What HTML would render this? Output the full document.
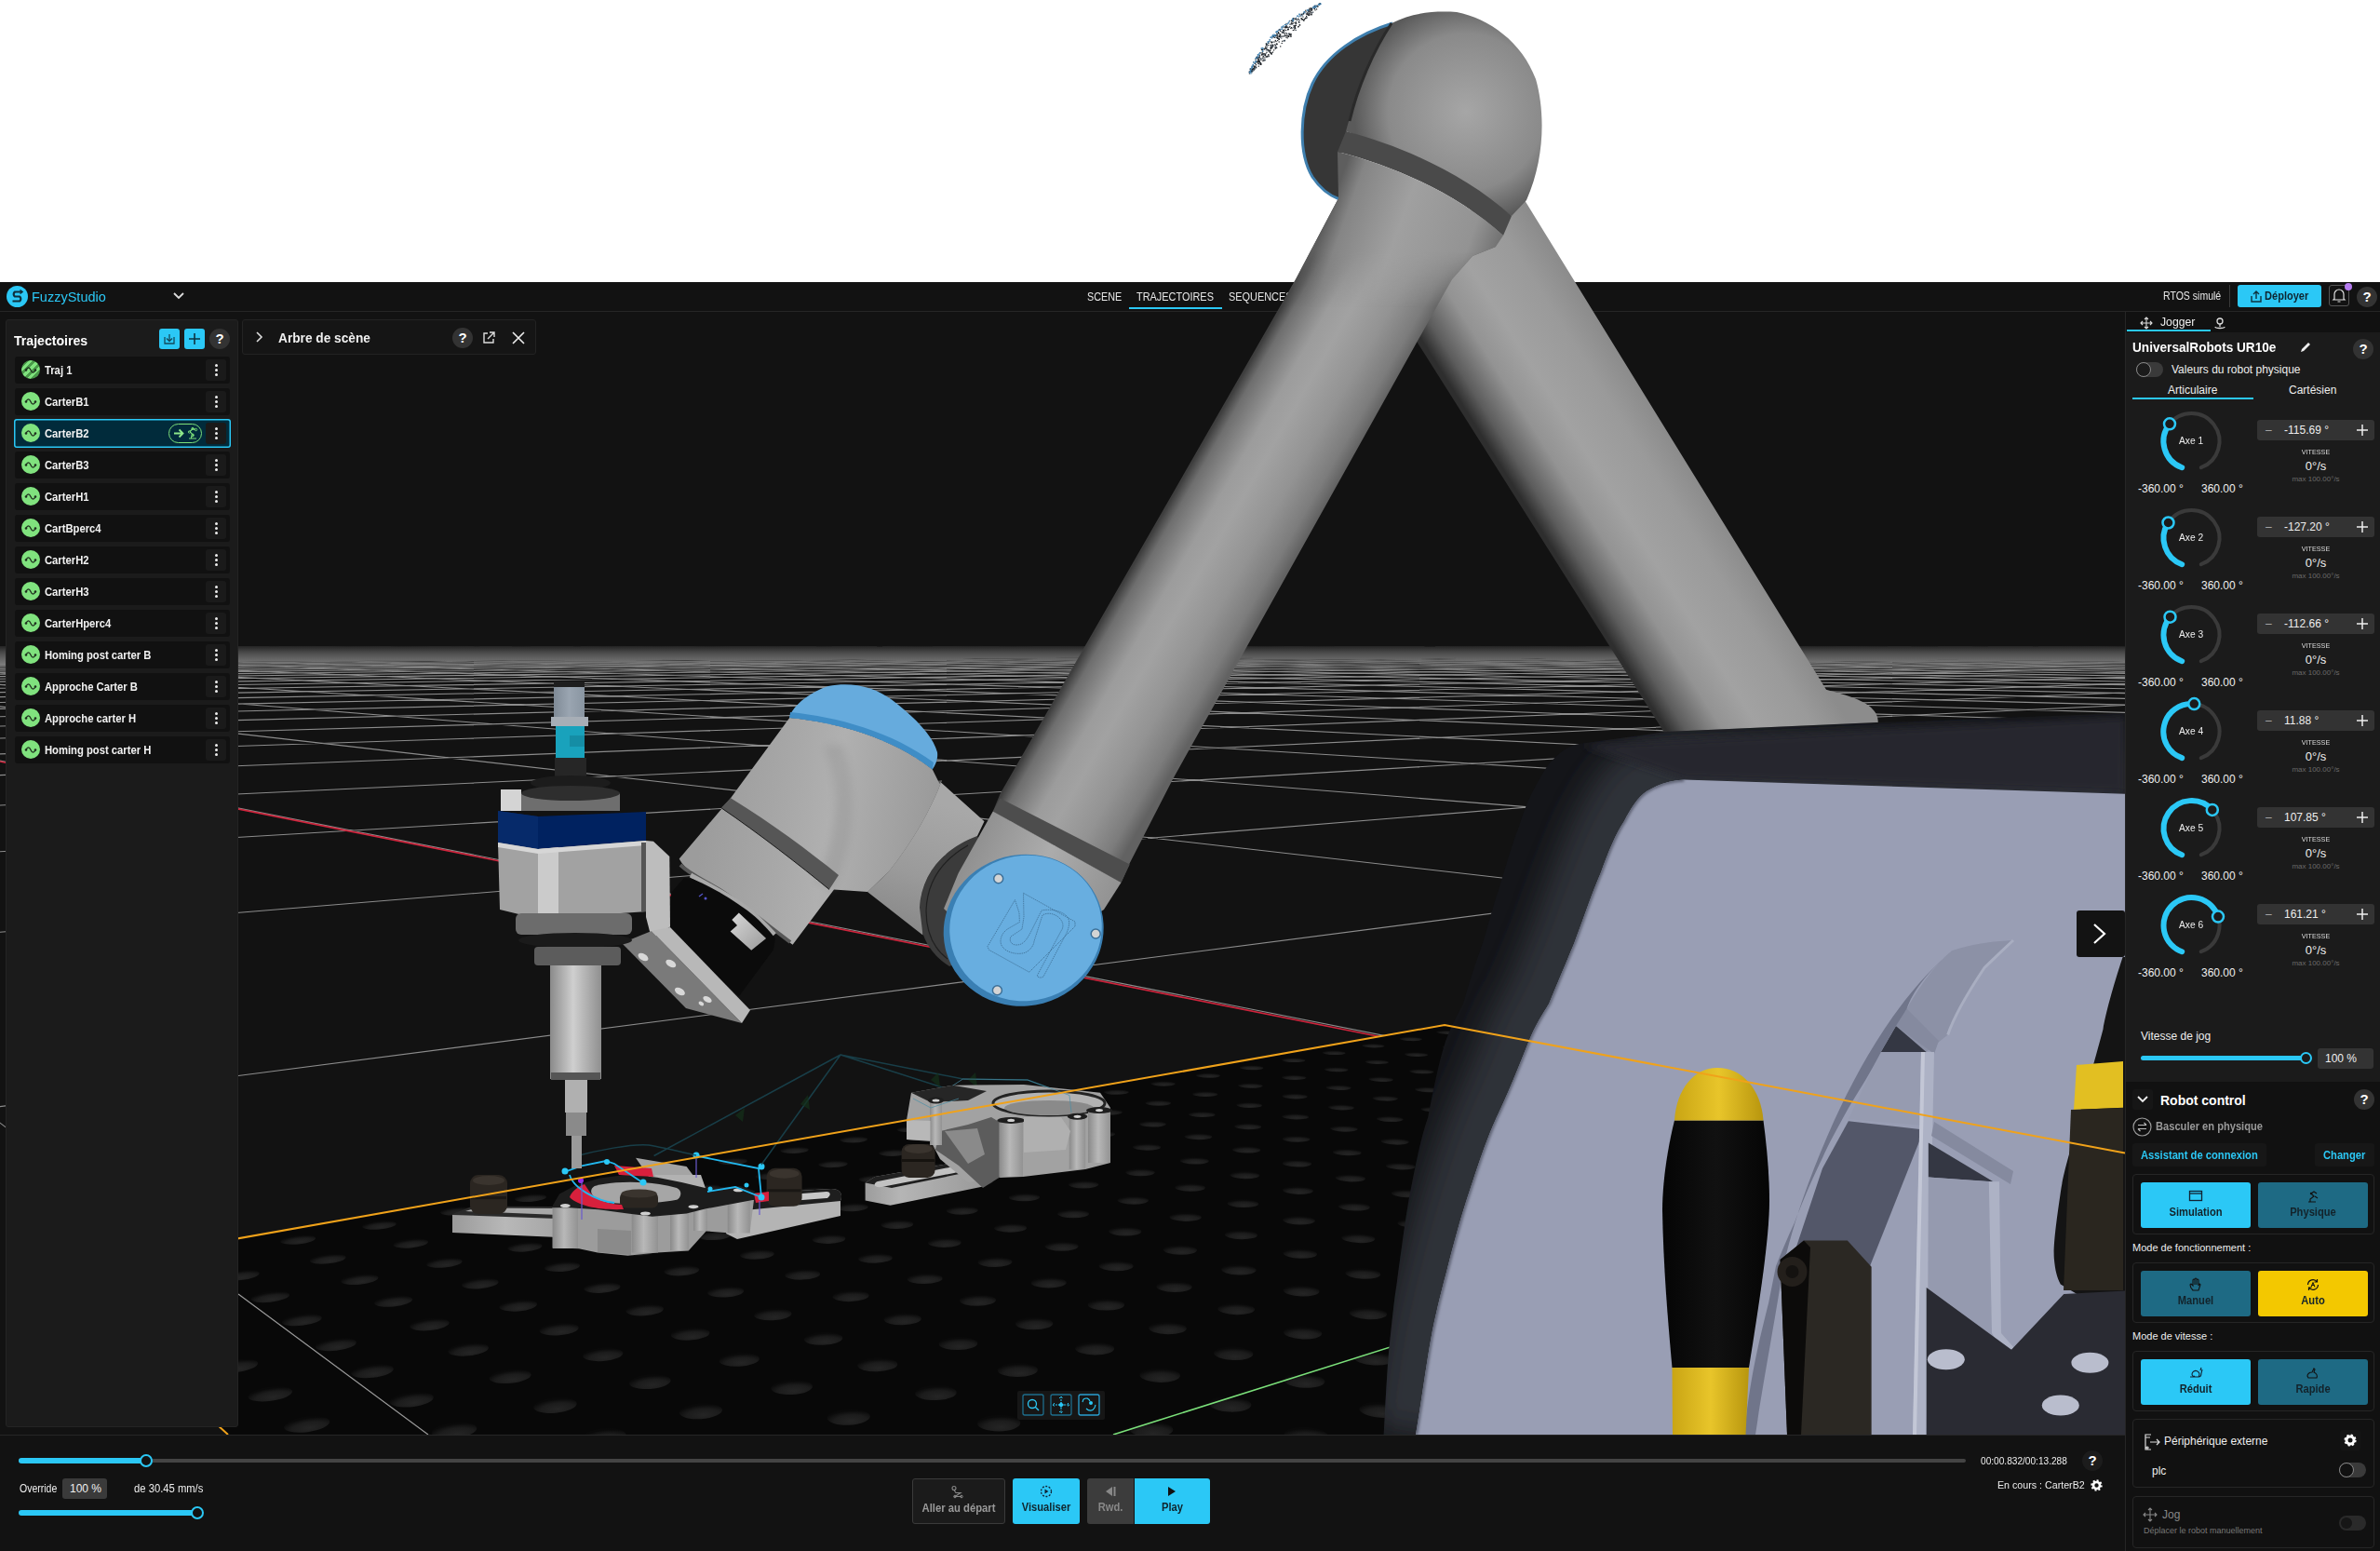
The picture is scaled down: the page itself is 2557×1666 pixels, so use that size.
<!DOCTYPE html><html><head><meta charset="utf-8"><style>
*{margin:0;padding:0;box-sizing:border-box}
html,body{width:2557px;height:1666px;overflow:hidden;background:#fff;font-family:"Liberation Sans",sans-serif;color:#e6e6e6}
.abs{position:absolute}
#topbar{position:absolute;left:0;top:303px;width:2557px;height:32px;background:#121212;border-bottom:1px solid #262626}
#main{position:absolute;left:0;top:335px;width:2557px;height:1331px;background:#121212}
#scene{position:absolute;left:0;top:0;width:2557px;height:1666px}
.t{position:absolute;white-space:nowrap;line-height:1}
#lp{position:absolute;left:6px;top:343px;width:250px;height:1190px;background:#1b1b1b;border:1px solid #242424;border-radius:3px}
.row{position:absolute;left:9px;width:231px;height:29px;background:#111;border-radius:3px}
.row .ic{position:absolute;left:7px;top:4px;width:20px;height:20px;border-radius:50%;background:#80e27e}
.row .nm{position:absolute;left:32px;top:8px;font-size:13px;font-weight:bold;color:#f2f2f2;white-space:nowrap;line-height:1;transform:scaleX(.865);transform-origin:left}
.row .kb{position:absolute;left:205px;top:3px;width:22px;height:23px;background:#1a1a1a;border-radius:3px}
.row .kb i{position:absolute;left:10px;width:3px;height:3px;background:#eee;border-radius:50%}
.btnc{position:absolute;background:#2bc8f6;border-radius:3px}
.help{position:absolute;border-radius:50%;background:#333;color:#fff;font-weight:bold;text-align:center}
#rp{position:absolute;left:2283px;top:335px;width:274px;height:1331px;background:#111;border-left:1px solid #262626}
#bb{position:absolute;left:0;top:1541px;width:2283px;height:125px;background:#121212;border-top:1px solid #262626}
</style></head><body>
<div id="topbar">
 <svg class="abs" style="left:6px;top:3px" width="25" height="25"><circle cx="12.5" cy="12.5" r="11.5" fill="#2bc8f6"/>
  <path d="M17 7.5H10a3 3 0 0 0 0 5h5a3 3 0 0 1 0 5H7.5" fill="none" stroke="#0e2f3c" stroke-width="2.2"/><path d="M15.5 5.5l2.5 2-2.5 2" fill="none" stroke="#0e2f3c" stroke-width="1.6"/></svg>
 <div class="t" style="left:34px;top:8px;font-size:15px;color:#2bc8f6;transform:scaleX(.967);transform-origin:left">FuzzyStudio</div>
 <svg class="abs" style="left:185px;top:9px" width="14" height="12"><path d="M2 3l5 5 5-5" fill="none" stroke="#ddd" stroke-width="1.8"/></svg>
 <div class="t" style="left:1168px;top:9px;font-size:13px;color:#e8e8e8;transform:scaleX(.83);transform-origin:left">SCENE</div>
 <div class="t" style="left:1221px;top:9px;font-size:13px;color:#e8e8e8;transform:scaleX(.84);transform-origin:left">TRAJECTOIRES</div>
 <div class="abs" style="left:1213px;top:27px;width:100px;height:2px;background:#2bc8f6"></div>
 <div class="t" style="left:1320px;top:9px;font-size:13px;color:#e8e8e8;transform:scaleX(.84);transform-origin:left">SEQUENCES</div>
 <div class="t" style="left:2324px;top:8px;font-size:13px;color:#e8e8e8;transform:scaleX(.81);transform-origin:left">RTOS simulé</div>
 <div class="abs" style="left:2395px;top:3px;width:1px;height:24px;background:#3a3a3a"></div>
 <div class="abs" style="left:2404px;top:3px;width:90px;height:24px;background:#2bc8f6;border-radius:3px">
  <svg class="abs" style="left:12px;top:5px" width="16" height="15"><path d="M3 7v6h10V7M8 2v8M5 5l3-3 3 3" fill="none" stroke="#0d3340" stroke-width="1.4"/></svg>
  <div class="t" style="left:29px;top:5px;font-size:13px;font-weight:bold;color:#0d2530;transform:scaleX(.85);transform-origin:left">Déployer</div></div>
 <div class="abs" style="left:2502px;top:3px;width:22px;height:23px;border:1px solid #555;border-radius:3px">
  <svg width="20" height="21"><path d="M5 14V9a5 5 0 0 1 10 0v5l1 1H4zM8.5 17h3" fill="none" stroke="#ddd" stroke-width="1.2"/></svg></div>
 <div class="abs" style="left:2519px;top:1px;width:8px;height:8px;border-radius:50%;background:#b57cf0"></div>
 <div class="help" style="left:2532px;top:5px;width:22px;height:22px;font-size:15px;line-height:22px">?</div>
</div><div id="main"></div><svg id="scene" width="2557" height="1666" viewBox="0 0 2557 1666" xmlns="http://www.w3.org/2000/svg"><defs>
<radialGradient id="holeg" cx="0.55" cy="0.75" r="0.65"><stop offset="0" stop-color="#252525"/><stop offset="0.6" stop-color="#1c1c1c"/><stop offset="1" stop-color="#0a0a0a"/></radialGradient>
<linearGradient id="hzfade" x1="0" y1="0" x2="0" y2="1"><stop offset="0" stop-color="#121212" stop-opacity="0.85"/><stop offset="0.25" stop-color="#121212" stop-opacity="0.5"/><stop offset="0.6" stop-color="#121212" stop-opacity="0.15"/><stop offset="1" stop-color="#121212" stop-opacity="0"/></linearGradient>
<linearGradient id="fa" gradientUnits="userSpaceOnUse" x1="1221.6" y1="600" x2="1348.6" y2="673"><stop offset="0" stop-color="#3e3e3e"/><stop offset="0.08" stop-color="#6e6e6e"/><stop offset="0.3" stop-color="#9c9c9c"/><stop offset="0.45" stop-color="#a2a2a2"/><stop offset="0.7" stop-color="#939393"/><stop offset="0.9" stop-color="#7c7c7c"/><stop offset="1" stop-color="#626262"/></linearGradient>
<linearGradient id="ua" gradientUnits="userSpaceOnUse" x1="1675" y1="600" x2="1819" y2="509.6"><stop offset="0" stop-color="#2e2e2e"/><stop offset="0.1" stop-color="#5c5c5c"/><stop offset="0.3" stop-color="#939393"/><stop offset="0.5" stop-color="#a2a2a2"/><stop offset="0.8" stop-color="#9a9a9a"/><stop offset="1" stop-color="#8c8c8c"/></linearGradient>
<radialGradient id="dome" gradientUnits="userSpaceOnUse" cx="1575" cy="120" r="120"><stop offset="0" stop-color="#a6a6a6"/><stop offset="0.7" stop-color="#8a8a8a"/><stop offset="1" stop-color="#5a5a5a"/></radialGradient>
<linearGradient id="shaft" x1="0" y1="0" x2="1" y2="0"><stop offset="0" stop-color="#8a8a8a"/><stop offset="0.45" stop-color="#cfcfcf"/><stop offset="1" stop-color="#8f8f8f"/></linearGradient>
<linearGradient id="seatdark" gradientUnits="userSpaceOnUse" x1="1560" y1="1100" x2="1700" y2="1060"><stop offset="0" stop-color="#15161a"/><stop offset="0.7" stop-color="#22242a"/><stop offset="1" stop-color="#26282f"/></linearGradient>
<linearGradient id="seatlav" gradientUnits="userSpaceOnUse" x1="1560" y1="1100" x2="1760" y2="1050"><stop offset="0" stop-color="#505466"/><stop offset="0.6" stop-color="#989db2"/><stop offset="1" stop-color="#9ba0b6"/></linearGradient>
<linearGradient id="handle" x1="0" y1="0" x2="1" y2="0"><stop offset="0" stop-color="#050505"/><stop offset="0.5" stop-color="#111"/><stop offset="1" stop-color="#050505"/></linearGradient>
<linearGradient id="yel" x1="0" y1="0" x2="1" y2="0"><stop offset="0" stop-color="#c9a514"/><stop offset="0.5" stop-color="#e8c52a"/><stop offset="1" stop-color="#b8960e"/></linearGradient>
<linearGradient id="collar" gradientUnits="userSpaceOnUse" x1="1425" y1="235" x2="1605" y2="300"><stop offset="0" stop-color="#5e5e5e"/><stop offset="0.1" stop-color="#858585"/><stop offset="0.4" stop-color="#a0a0a0"/><stop offset="0.8" stop-color="#939393"/><stop offset="1" stop-color="#6a6a6a"/></linearGradient>
<linearGradient id="vfade" gradientUnits="userSpaceOnUse" x1="0" y1="270" x2="0" y2="330"><stop offset="0" stop-color="#fff"/><stop offset="1" stop-color="#000"/></linearGradient>
<mask id="collarmask" maskUnits="userSpaceOnUse" x="1300" y="100" width="400" height="300"><rect x="1300" y="100" width="400" height="300" fill="url(#vfade)"/></mask>
<linearGradient id="w1h" gradientUnits="userSpaceOnUse" x1="1030" y1="900" x2="1200" y2="980"><stop offset="0" stop-color="#8a8a8a"/><stop offset="0.5" stop-color="#acacac"/><stop offset="1" stop-color="#8f8f8f"/></linearGradient>
<linearGradient id="w2" gradientUnits="userSpaceOnUse" x1="760" y1="860" x2="1000" y2="900"><stop offset="0" stop-color="#9c9c9c"/><stop offset="0.35" stop-color="#a8a8a8"/><stop offset="0.55" stop-color="#b0b0b0"/><stop offset="1" stop-color="#9a9a9a"/></linearGradient>
<linearGradient id="cyl1" x1="0" y1="0" x2="1" y2="0"><stop offset="0" stop-color="#7f8a96"/><stop offset="0.5" stop-color="#9aa5b1"/><stop offset="1" stop-color="#8995a1"/></linearGradient>
<filter id="blur18" x="-50%" y="-50%" width="200%" height="200%"><feGaussianBlur stdDeviation="28"/></filter>
<clipPath id="lavclip"><path d="M1521 1541 C1528 1500 1533 1460 1538.8 1430 C1544 1405 1549 1385 1554 1366.5 C1562 1335 1570 1305 1579.5 1277.3 C1590 1245 1598 1222 1607.5 1201 C1620 1175 1630 1150 1642.5 1118.6 C1650 1100 1657 1090 1664.2 1078 C1675 1052 1683 1033 1691.3 1013 C1700 990 1710 960 1720 937 C1728 915 1736 895 1745 882 C1752 868 1760 856 1769 850 C1782 842 1795 838 1809.4 837.4 L2283 852.8 L2283 1541 Z"/></clipPath>
<linearGradient id="conseg" gradientUnits="userSpaceOnUse" x1="1000" y1="860" x2="960" y2="990"><stop offset="0" stop-color="#a8a8a8"/><stop offset="0.6" stop-color="#9a9a9a"/><stop offset="1" stop-color="#8a8a8a"/></linearGradient>
<filter id="blur3" x="-50%" y="-50%" width="200%" height="200%"><feGaussianBlur stdDeviation="4"/></filter>
<linearGradient id="barg" x1="0" y1="0" x2="1" y2="0"><stop offset="0" stop-color="#9a9a9a"/><stop offset="0.5" stop-color="#b8b8b8"/><stop offset="1" stop-color="#a5a5a5"/></linearGradient>
<linearGradient id="barg2" x1="0" y1="0" x2="1" y2="0"><stop offset="0" stop-color="#9c9c9c"/><stop offset="0.3" stop-color="#b5b5b5"/><stop offset="1" stop-color="#9a9a9a"/></linearGradient>
<linearGradient id="post" x1="0" y1="0" x2="1" y2="0"><stop offset="0" stop-color="#8a8a8a"/><stop offset="0.45" stop-color="#b8b8b8"/><stop offset="1" stop-color="#929292"/></linearGradient>
<linearGradient id="notch" x1="0" y1="0" x2="1" y2="1"><stop offset="0" stop-color="#d8d8d8"/><stop offset="1" stop-color="#9a9a9a"/></linearGradient>
<clipPath id="tableclip"><path d="M1552 1101 L2283 1238.5 L2283 1541 L245 1541 L54 1366 Z"/></clipPath>
<clipPath id="frclip"><path d="M1486.6 1541 C1489 1500 1491 1460 1493 1442.8 C1496 1415 1498 1395 1500.6 1379 C1506 1340 1511 1300 1515.8 1277 C1521 1250 1527 1220 1534.2 1200 C1540 1170 1546 1140 1553 1118.6 C1560 1100 1566 1090 1572 1078 C1580 1050 1587 1030 1593.8 1010.2 C1600 990 1605 970 1610 956 C1618 930 1625 905 1631.7 888.3 C1637 872 1642 858 1648 847.7 C1655 835 1660 826 1664.2 820.6 C1675 808 1685 801 1696.7 799 L1790 786 L2016 776 L2283 766 L2283 1541 Z"/></clipPath>
<filter id="blur12" x="-50%" y="-50%" width="200%" height="200%"><feGaussianBlur stdDeviation="16"/></filter>
<filter id="blur2" x="-50%" y="-50%" width="200%" height="200%"><feGaussianBlur stdDeviation="1.5"/></filter>
<clipPath id="vp"><rect x="0" y="335" width="2283" height="1206"/></clipPath>
</defs><g clip-path="url(#vp)"><rect x="0" y="335" width="2283" height="1206" fill="#121212"/><path d="M-410464.3 3527.0L-3201.3 697.4M-399861.4 3527.0L-3102.4 697.2M-389258.5 3527.0L-3006.3 697.0M-378655.6 3527.0L-2912.7 696.7M-368052.7 3527.0L-2821.7 696.5M-357449.9 3527.0L-2733.0 696.3M-346847.0 3527.0L-2646.6 696.1M-336244.1 3527.0L-2562.5 695.9M-325641.2 3527.0L-2480.4 695.7M-315038.3 3527.0L-2400.5 695.5M-304435.4 3527.0L-2322.4 695.3M-293832.5 3527.0L-2246.3 695.1M-283229.7 3527.0L-2172.0 694.9M-272626.8 3527.0L-2099.5 694.7M-262023.9 3527.0L-2028.7 694.6M-251421.0 3527.0L-1968.0 694.5M-240818.1 3527.0L-1914.0 694.5M-230215.2 3527.0L-1860.0 694.5M-219612.4 3527.0L-1806.0 694.5M-209009.5 3527.0L-1752.0 694.5M-198406.6 3527.0L-1698.0 694.5M-187803.7 3527.0L-1644.0 694.5M-177200.8 3527.0L-1590.0 694.5M-166597.9 3527.0L-1536.0 694.5M-155995.0 3527.0L-1482.0 694.5M-145392.2 3527.0L-1428.0 694.5M-134789.3 3527.0L-1374.0 694.5M-124186.4 3527.0L-1320.0 694.5M-113583.5 3527.0L-1266.0 694.5M-102980.6 3527.0L-1212.0 694.5M-92377.7 3527.0L-1158.0 694.5M-81774.9 3527.0L-1104.0 694.5M-71172.0 3527.0L-1050.0 694.5M-60569.1 3527.0L-996.0 694.5M-49966.2 3527.0L-942.0 694.5M-39363.3 3527.0L-888.0 694.5M-28760.4 3527.0L-834.0 694.5M-18157.5 3527.0L-780.0 694.5M-7554.7 3527.0L-726.0 694.5M3048.2 3527.0L-672.0 694.5M13651.1 3527.0L-618.0 694.5M24254.0 3527.0L-564.0 694.5M34856.9 3527.0L-510.0 694.5M45459.8 3527.0L-456.0 694.5M56062.6 3527.0L-401.9 694.5M66665.5 3527.0L-347.9 694.5M77268.4 3527.0L-293.9 694.5M87871.3 3527.0L-239.9 694.5M98474.2 3527.0L-185.9 694.5M109077.1 3527.0L-131.9 694.5M119680.0 3527.0L-77.9 694.5M130282.8 3527.0L-23.9 694.5M140885.7 3527.0L30.1 694.5M151488.6 3527.0L84.1 694.5M162091.5 3527.0L138.1 694.5M172694.4 3527.0L192.1 694.5M183297.3 3527.0L246.1 694.5M193900.1 3527.0L300.1 694.5M204503.0 3527.0L354.1 694.5M215105.9 3527.0L408.1 694.5M225708.8 3527.0L462.1 694.5M236311.7 3527.0L516.1 694.5M246914.6 3527.0L570.1 694.5M257517.5 3527.0L624.1 694.5M268120.3 3527.0L678.1 694.5M278723.2 3527.0L732.1 694.5M289326.1 3527.0L786.1 694.5M299929.0 3527.0L840.1 694.5M310531.9 3527.0L894.1 694.5M321134.8 3527.0L948.1 694.5M331737.6 3527.0L1002.1 694.5M342340.5 3527.0L1056.1 694.5M352943.4 3527.0L1110.1 694.5M363546.3 3527.0L1164.1 694.5M374149.2 3527.0L1218.1 694.5M384752.1 3527.0L1272.1 694.5M395354.9 3527.0L1326.1 694.5M405957.8 3527.0L1380.1 694.5M416560.7 3527.0L1434.1 694.5M427163.6 3527.0L1488.1 694.5M437766.5 3527.0L1542.1 694.5M448369.4 3527.0L1596.1 694.5M458972.3 3527.0L1650.1 694.5M469575.1 3527.0L1704.1 694.5M480178.0 3527.0L1758.1 694.5M490780.9 3527.0L1812.1 694.5M501383.8 3527.0L1866.1 694.5M276592.2 2219.8L1920.1 694.5M125600.6 1367.1L1974.1 694.5M82236.8 1122.2L2028.1 694.5M61661.2 1006.0L2082.1 694.5M49648.4 938.2L2136.1 694.5M41773.8 893.7L2190.1 694.5M36213.3 862.3L2244.1 694.5M32077.5 839.0L2298.1 694.5M28881.0 820.9L2352.1 694.5M26336.5 806.5L2406.1 694.5M24262.9 794.8L2460.1 694.5M22540.7 785.1L2514.1 694.5M21087.4 776.9L2568.1 694.5M19844.6 769.9L2622.1 694.5M18769.7 763.8L2676.1 694.5M17830.8 758.5L2730.1 694.5M17003.7 753.8L2784.1 694.5M16269.5 749.7L2838.1 694.5M15613.3 746.0L2892.1 694.5M15023.4 742.6L2946.1 694.5M14490.2 739.6L3000.1 694.5M14005.9 736.9L3054.1 694.5M13564.1 734.4L3108.1 694.5M13159.4 732.1L3162.1 694.5M12787.4 730.0L3216.1 694.5M12444.1 728.1L3270.1 694.5M12126.5 726.3L3324.1 694.5M11831.7 724.6L3378.1 694.5M11557.4 723.1L3432.1 694.5M11301.5 721.6L3486.1 694.5M11062.2 720.3L3540.1 694.5M10838.0 719.0L3594.2 694.5M10627.4 717.8L3648.2 694.5M10429.3 716.7L3702.2 694.5M10242.6 715.6L3756.2 694.5M10066.3 714.7L3810.2 694.5M9899.5 713.7L3864.2 694.5M9741.6 712.8L3918.2 694.5M9591.9 712.0L3972.2 694.5M9449.6 711.2L4026.2 694.5M9314.4 710.4L4080.2 694.5M9185.6 709.7L4134.2 694.5M9062.8 709.0L4188.2 694.5M508063.8 3527.0L8945.6 708.3M495231.2 3527.0L8686.5 707.6M482398.7 3527.0L8441.0 706.8M469566.2 3527.0L8208.0 706.2M456733.7 3527.0L7986.6 705.5M443901.2 3527.0L7776.0 704.9M431068.7 3527.0L7575.3 704.3M418236.1 3527.0L7383.9 703.7M405403.6 3527.0L7201.2 703.2M392571.1 3527.0L7026.6 702.7M379738.6 3527.0L6859.5 702.2M366906.1 3527.0L6699.6 701.7M354073.6 3527.0L6546.2 701.3M341241.0 3527.0L6399.1 700.8M328408.5 3527.0L6257.8 700.4M315576.0 3527.0L6122.1 700.0M302743.5 3527.0L5991.6 699.6M289911.0 3527.0L5865.9 699.3M277078.5 3527.0L5745.0 698.9M264245.9 3527.0L5628.4 698.6M251413.4 3527.0L5515.9 698.2M238580.9 3527.0L5407.4 697.9M225748.4 3527.0L5302.6 697.6M212915.9 3527.0L5201.3 697.3M200083.4 3527.0L5103.4 697.0M187250.8 3527.0L5008.8 696.8M174418.3 3527.0L4917.1 696.5M161585.8 3527.0L4828.4 696.2M148753.3 3527.0L4742.4 696.0M135920.8 3527.0L4659.0 695.7M123088.3 3527.0L4578.2 695.5M110255.7 3527.0L4499.8 695.3M97423.2 3527.0L4423.7 695.0M84590.7 3527.0L4349.8 694.8M71758.2 3527.0L4278.0 694.6M58925.7 3527.0L4210.1 694.5M46093.2 3527.0L4144.7 694.5M33260.6 3527.0L4079.4 694.5M20428.1 3527.0L4014.0 694.5M7595.6 3527.0L3948.7 694.5M-5236.9 3527.0L3883.3 694.5M-18069.4 3527.0L3818.0 694.5M-30901.9 3527.0L3752.6 694.5M-43734.5 3527.0L3687.2 694.5M-56567.0 3527.0L3621.9 694.5M-69399.5 3527.0L3556.5 694.5M-82232.0 3527.0L3491.2 694.5M-95064.5 3527.0L3425.8 694.5M-107897.0 3527.0L3360.5 694.5M-120729.6 3527.0L3295.1 694.5M-133562.1 3527.0L3229.7 694.5M-146394.6 3527.0L3164.4 694.5M-159227.1 3527.0L3099.0 694.5M-172059.6 3527.0L3033.7 694.5M-184892.2 3527.0L2968.3 694.5M-197724.7 3527.0L2903.0 694.5M-210557.2 3527.0L2837.6 694.5M-223389.7 3527.0L2772.2 694.5M-236222.2 3527.0L2706.9 694.5M-249054.7 3527.0L2641.5 694.5M-261887.3 3527.0L2576.2 694.5M-274719.8 3527.0L2510.8 694.5M-287552.3 3527.0L2445.5 694.5M-300384.8 3527.0L2380.1 694.5M-313217.3 3527.0L2314.7 694.5M-326049.8 3527.0L2249.4 694.5M-338882.4 3527.0L2184.0 694.5M-351714.9 3527.0L2118.7 694.5M-364547.4 3527.0L2053.3 694.5M-377379.9 3527.0L1988.0 694.5M-390212.4 3527.0L1922.6 694.5M-403044.9 3527.0L1857.2 694.5M-189402.1 1991.1L1791.9 694.5M-83499.7 1255.3L1726.5 694.5M-53733.1 1048.5L1661.2 694.5M-39708.0 951.1L1595.8 694.5M-31548.7 894.4L1530.5 694.5M-26211.8 857.3L1465.1 694.5M-22448.8 831.2L1399.7 694.5M-19652.8 811.7L1334.4 694.5M-17493.6 796.7L1269.0 694.5M-15775.9 784.8L1203.7 694.5M-14376.8 775.1L1138.3 694.5M-13215.2 767.0L1073.0 694.5M-12235.4 760.2L1007.6 694.5M-11397.7 754.4L942.2 694.5M-10673.4 749.4L876.9 694.5M-10040.9 745.0L811.5 694.5M-9483.8 741.1L746.2 694.5M-8989.3 737.7L680.8 694.5M-8547.5 734.6L615.5 694.5M-8150.3 731.8L550.1 694.5M-7791.4 729.3L484.7 694.5M-7465.4 727.1L419.4 694.5M-7168.0 725.0L354.0 694.5M-6895.7 723.1L288.7 694.5M-6645.3 721.4L223.3 694.5M-6414.4 719.8L158.0 694.5M-6200.7 718.3L92.6 694.5M-6002.4 716.9L27.2 694.5M-5817.8 715.6L-38.1 694.5M-5645.7 714.4L-103.5 694.5M-5484.7 713.3L-168.8 694.5M-5333.9 712.3L-234.2 694.5M-5192.3 711.3L-299.5 694.5M-5059.0 710.3L-364.9 694.5M-4933.4 709.5L-430.3 694.5M-4814.9 708.7L-495.6 694.5M-4702.7 707.9L-561.0 694.5M-4596.6 707.1L-626.3 694.5M-4495.9 706.4L-691.7 694.5M-4400.2 705.8L-757.0 694.5M-4309.3 705.1L-822.4 694.5M-4222.7 704.5L-887.8 694.5M-4140.1 704.0L-953.1 694.5M-4061.3 703.4L-1018.5 694.5M-3986.1 702.9L-1083.8 694.5M-3914.1 702.4L-1149.2 694.5M-3845.2 701.9L-1214.5 694.5M-3779.2 701.5L-1279.9 694.5M-3715.9 701.0L-1345.3 694.5M-3655.1 700.6L-1410.6 694.5M-3596.8 700.2L-1476.0 694.5M-3540.6 699.8L-1541.3 694.5M-3486.6 699.4L-1606.7 694.5M-3434.7 699.1L-1672.0 694.5M-3384.6 698.7L-1737.4 694.5M-3336.3 698.4L-1802.8 694.5M-3289.7 698.1L-1868.1 694.5M-3244.7 697.7L-1933.5 694.5" stroke="#8c8c8c" stroke-width="1.1" fill="none"/><rect x="0" y="694" width="2283" height="32" fill="url(#hzfade)"/><path d="M0 818 L1560 1129" stroke="#d0243c" stroke-width="1.6"/><path d="M1552 1101 L2283 1238.5 L2283 1541 L245 1541 L54 1366 Z" fill="#080808"/><g fill="url(#holeg)" clip-path="url(#tableclip)"><ellipse cx="1555.2" cy="1108.7" rx="11.9" ry="2.2" transform="rotate(2.0 1555.2 1108.7)"/><ellipse cx="1601.5" cy="1117.5" rx="12.2" ry="2.3" transform="rotate(2.3 1601.5 1117.5)"/><ellipse cx="1649.6" cy="1126.7" rx="12.5" ry="2.4" transform="rotate(2.5 1649.6 1126.7)"/><ellipse cx="1699.9" cy="1136.3" rx="12.9" ry="2.4" transform="rotate(2.8 1699.9 1136.3)"/><ellipse cx="1752.3" cy="1146.3" rx="13.2" ry="2.5" transform="rotate(3.1 1752.3 1146.3)"/><ellipse cx="1807.1" cy="1156.7" rx="13.6" ry="2.6" transform="rotate(3.4 1807.1 1156.7)"/><ellipse cx="1864.4" cy="1167.7" rx="14.0" ry="2.7" transform="rotate(3.8 1864.4 1167.7)"/><ellipse cx="1924.3" cy="1179.1" rx="14.5" ry="2.8" transform="rotate(4.1 1924.3 1179.1)"/><ellipse cx="1987.2" cy="1191.1" rx="15.0" ry="2.9" transform="rotate(4.4 1987.2 1191.1)"/><ellipse cx="2053.2" cy="1203.7" rx="15.5" ry="3.1" transform="rotate(4.8 2053.2 1203.7)"/><ellipse cx="2122.5" cy="1216.9" rx="16.1" ry="3.2" transform="rotate(5.2 2122.5 1216.9)"/><ellipse cx="2195.4" cy="1230.8" rx="16.7" ry="3.3" transform="rotate(5.6 2195.4 1230.8)"/><ellipse cx="2272.1" cy="1245.5" rx="17.4" ry="3.4" transform="rotate(6.0 2272.1 1245.5)"/><ellipse cx="1515.9" cy="1115.8" rx="12.1" ry="2.3" transform="rotate(1.9 1515.9 1115.8)"/><ellipse cx="1562.1" cy="1124.9" rx="12.4" ry="2.4" transform="rotate(2.1 1562.1 1124.9)"/><ellipse cx="1610.2" cy="1134.4" rx="12.7" ry="2.4" transform="rotate(2.4 1610.2 1134.4)"/><ellipse cx="1660.5" cy="1144.3" rx="13.0" ry="2.5" transform="rotate(2.7 1660.5 1144.3)"/><ellipse cx="1713.0" cy="1154.7" rx="13.4" ry="2.6" transform="rotate(3.0 1713.0 1154.7)"/><ellipse cx="1767.9" cy="1165.5" rx="13.8" ry="2.7" transform="rotate(3.3 1767.9 1165.5)"/><ellipse cx="1825.4" cy="1176.9" rx="14.2" ry="2.8" transform="rotate(3.7 1825.4 1176.9)"/><ellipse cx="1885.6" cy="1188.8" rx="14.7" ry="3.0" transform="rotate(4.0 1885.6 1188.8)"/><ellipse cx="1948.7" cy="1201.2" rx="15.2" ry="3.1" transform="rotate(4.4 1948.7 1201.2)"/><ellipse cx="2015.1" cy="1214.3" rx="15.7" ry="3.2" transform="rotate(4.8 2015.1 1214.3)"/><ellipse cx="2084.8" cy="1228.1" rx="16.3" ry="3.3" transform="rotate(5.2 2084.8 1228.1)"/><ellipse cx="2158.3" cy="1242.6" rx="17.0" ry="3.5" transform="rotate(5.6 2158.3 1242.6)"/><ellipse cx="2235.7" cy="1257.9" rx="17.7" ry="3.6" transform="rotate(6.0 2235.7 1257.9)"/><ellipse cx="1475.3" cy="1123.1" rx="12.2" ry="2.3" transform="rotate(1.7 1475.3 1123.1)"/><ellipse cx="1521.4" cy="1132.5" rx="12.6" ry="2.4" transform="rotate(2.0 1521.4 1132.5)"/><ellipse cx="1569.5" cy="1142.4" rx="12.9" ry="2.5" transform="rotate(2.3 1569.5 1142.4)"/><ellipse cx="1619.7" cy="1152.7" rx="13.2" ry="2.6" transform="rotate(2.6 1619.7 1152.7)"/><ellipse cx="1672.3" cy="1163.4" rx="13.6" ry="2.7" transform="rotate(2.9 1672.3 1163.4)"/><ellipse cx="1727.2" cy="1174.7" rx="14.0" ry="2.9" transform="rotate(3.2 1727.2 1174.7)"/><ellipse cx="1784.8" cy="1186.4" rx="14.4" ry="3.0" transform="rotate(3.6 1784.8 1186.4)"/><ellipse cx="1845.3" cy="1198.8" rx="14.9" ry="3.1" transform="rotate(3.9 1845.3 1198.8)"/><ellipse cx="1908.7" cy="1211.8" rx="15.4" ry="3.2" transform="rotate(4.3 1908.7 1211.8)"/><ellipse cx="1975.4" cy="1225.4" rx="16.0" ry="3.4" transform="rotate(4.7 1975.4 1225.4)"/><ellipse cx="2045.6" cy="1239.8" rx="16.6" ry="3.5" transform="rotate(5.1 2045.6 1239.8)"/><ellipse cx="2119.6" cy="1254.9" rx="17.2" ry="3.6" transform="rotate(5.6 2119.6 1254.9)"/><ellipse cx="2197.7" cy="1270.9" rx="17.9" ry="3.8" transform="rotate(6.0 2197.7 1270.9)"/><ellipse cx="2280.2" cy="1287.8" rx="18.7" ry="4.0" transform="rotate(6.5 2280.2 1287.8)"/><ellipse cx="1433.2" cy="1130.7" rx="12.4" ry="2.4" transform="rotate(1.5 1433.2 1130.7)"/><ellipse cx="1479.2" cy="1140.5" rx="12.7" ry="2.5" transform="rotate(1.8 1479.2 1140.5)"/><ellipse cx="1527.3" cy="1150.7" rx="13.1" ry="2.6" transform="rotate(2.1 1527.3 1150.7)"/><ellipse cx="1577.5" cy="1161.3" rx="13.4" ry="2.7" transform="rotate(2.4 1577.5 1161.3)"/><ellipse cx="1630.0" cy="1172.5" rx="13.8" ry="2.9" transform="rotate(2.7 1630.0 1172.5)"/><ellipse cx="1685.0" cy="1184.1" rx="14.2" ry="3.0" transform="rotate(3.1 1685.0 1184.1)"/><ellipse cx="1742.7" cy="1196.4" rx="14.6" ry="3.1" transform="rotate(3.4 1742.7 1196.4)"/><ellipse cx="1803.3" cy="1209.2" rx="15.1" ry="3.2" transform="rotate(3.8 1803.3 1209.2)"/><ellipse cx="1867.0" cy="1222.7" rx="15.6" ry="3.4" transform="rotate(4.2 1867.0 1222.7)"/><ellipse cx="1934.0" cy="1237.0" rx="16.2" ry="3.5" transform="rotate(4.7 1934.0 1237.0)"/><ellipse cx="2004.6" cy="1251.9" rx="16.8" ry="3.7" transform="rotate(5.1 2004.6 1251.9)"/><ellipse cx="2079.1" cy="1267.8" rx="17.5" ry="3.8" transform="rotate(5.6 2079.1 1267.8)"/><ellipse cx="2157.9" cy="1284.5" rx="18.2" ry="4.0" transform="rotate(6.0 2157.9 1284.5)"/><ellipse cx="2241.2" cy="1302.2" rx="19.0" ry="4.2" transform="rotate(6.5 2241.2 1302.2)"/><ellipse cx="1389.7" cy="1138.6" rx="12.6" ry="2.5" transform="rotate(1.4 1389.7 1138.6)"/><ellipse cx="1435.6" cy="1148.7" rx="12.9" ry="2.6" transform="rotate(1.6 1435.6 1148.7)"/><ellipse cx="1483.5" cy="1159.2" rx="13.3" ry="2.7" transform="rotate(1.9 1483.5 1159.2)"/><ellipse cx="1533.6" cy="1170.3" rx="13.6" ry="2.9" transform="rotate(2.2 1533.6 1170.3)"/><ellipse cx="1586.1" cy="1181.9" rx="14.0" ry="3.0" transform="rotate(2.6 1586.1 1181.9)"/><ellipse cx="1641.2" cy="1194.0" rx="14.4" ry="3.1" transform="rotate(2.9 1641.2 1194.0)"/><ellipse cx="1699.0" cy="1206.7" rx="14.9" ry="3.2" transform="rotate(3.3 1699.0 1206.7)"/><ellipse cx="1759.7" cy="1220.1" rx="15.3" ry="3.4" transform="rotate(3.7 1759.7 1220.1)"/><ellipse cx="1823.5" cy="1234.2" rx="15.9" ry="3.5" transform="rotate(4.1 1823.5 1234.2)"/><ellipse cx="1890.8" cy="1249.0" rx="16.4" ry="3.7" transform="rotate(4.6 1890.8 1249.0)"/><ellipse cx="1961.8" cy="1264.7" rx="17.1" ry="3.9" transform="rotate(5.0 1961.8 1264.7)"/><ellipse cx="2036.8" cy="1281.2" rx="17.8" ry="4.0" transform="rotate(5.5 2036.8 1281.2)"/><ellipse cx="2116.2" cy="1298.7" rx="18.5" ry="4.2" transform="rotate(6.0 2116.2 1298.7)"/><ellipse cx="2200.3" cy="1317.2" rx="19.4" ry="4.4" transform="rotate(6.6 2200.3 1317.2)"/><ellipse cx="2289.7" cy="1336.9" rx="20.3" ry="4.6" transform="rotate(7.1 2289.7 1336.9)"/><ellipse cx="1344.6" cy="1146.7" rx="12.8" ry="2.6" transform="rotate(1.1 1344.6 1146.7)"/><ellipse cx="1390.3" cy="1157.2" rx="13.1" ry="2.7" transform="rotate(1.4 1390.3 1157.2)"/><ellipse cx="1438.1" cy="1168.1" rx="13.5" ry="2.9" transform="rotate(1.7 1438.1 1168.1)"/><ellipse cx="1488.1" cy="1179.6" rx="13.8" ry="3.0" transform="rotate(2.0 1488.1 1179.6)"/><ellipse cx="1540.6" cy="1191.6" rx="14.2" ry="3.1" transform="rotate(2.4 1540.6 1191.6)"/><ellipse cx="1595.6" cy="1204.2" rx="14.6" ry="3.3" transform="rotate(2.7 1595.6 1204.2)"/><ellipse cx="1653.4" cy="1217.5" rx="15.1" ry="3.4" transform="rotate(3.1 1653.4 1217.5)"/><ellipse cx="1714.2" cy="1231.4" rx="15.6" ry="3.6" transform="rotate(3.5 1714.2 1231.4)"/><ellipse cx="1778.2" cy="1246.1" rx="16.1" ry="3.7" transform="rotate(4.0 1778.2 1246.1)"/><ellipse cx="1845.8" cy="1261.6" rx="16.7" ry="3.9" transform="rotate(4.5 1845.8 1261.6)"/><ellipse cx="1917.1" cy="1277.9" rx="17.3" ry="4.1" transform="rotate(5.0 1917.1 1277.9)"/><ellipse cx="1992.6" cy="1295.2" rx="18.1" ry="4.3" transform="rotate(5.5 1992.6 1295.2)"/><ellipse cx="2072.5" cy="1313.6" rx="18.8" ry="4.5" transform="rotate(6.0 2072.5 1313.6)"/><ellipse cx="2157.4" cy="1333.0" rx="19.7" ry="4.7" transform="rotate(6.6 2157.4 1333.0)"/><ellipse cx="2247.7" cy="1353.7" rx="20.7" ry="4.9" transform="rotate(7.1 2247.7 1353.7)"/><ellipse cx="1298.0" cy="1155.1" rx="13.0" ry="2.7" transform="rotate(0.9 1298.0 1155.1)"/><ellipse cx="1343.4" cy="1166.0" rx="13.3" ry="2.8" transform="rotate(1.2 1343.4 1166.0)"/><ellipse cx="1391.0" cy="1177.4" rx="13.7" ry="3.0" transform="rotate(1.5 1391.0 1177.4)"/><ellipse cx="1440.9" cy="1189.3" rx="14.0" ry="3.1" transform="rotate(1.8 1440.9 1189.3)"/><ellipse cx="1493.2" cy="1201.8" rx="14.4" ry="3.2" transform="rotate(2.2 1493.2 1201.8)"/><ellipse cx="1548.1" cy="1214.9" rx="14.9" ry="3.4" transform="rotate(2.5 1548.1 1214.9)"/><ellipse cx="1605.9" cy="1228.7" rx="15.3" ry="3.6" transform="rotate(2.9 1605.9 1228.7)"/><ellipse cx="1666.8" cy="1243.2" rx="15.8" ry="3.7" transform="rotate(3.4 1666.8 1243.2)"/><ellipse cx="1730.9" cy="1258.5" rx="16.4" ry="3.9" transform="rotate(3.8 1730.9 1258.5)"/><ellipse cx="1798.7" cy="1274.7" rx="17.0" ry="4.1" transform="rotate(4.3 1798.7 1274.7)"/><ellipse cx="1870.3" cy="1291.8" rx="17.6" ry="4.3" transform="rotate(4.8 1870.3 1291.8)"/><ellipse cx="1946.2" cy="1310.0" rx="18.4" ry="4.5" transform="rotate(5.4 1946.2 1310.0)"/><ellipse cx="2026.7" cy="1329.2" rx="19.2" ry="4.7" transform="rotate(6.0 2026.7 1329.2)"/><ellipse cx="2112.3" cy="1349.7" rx="20.1" ry="4.9" transform="rotate(6.6 2112.3 1349.7)"/><ellipse cx="2203.5" cy="1371.4" rx="21.1" ry="5.2" transform="rotate(7.2 2203.5 1371.4)"/><ellipse cx="1249.6" cy="1163.9" rx="13.2" ry="2.8" transform="rotate(0.7 1249.6 1163.9)"/><ellipse cx="1294.7" cy="1175.1" rx="13.6" ry="3.0" transform="rotate(0.9 1294.7 1175.1)"/><ellipse cx="1342.1" cy="1186.9" rx="13.9" ry="3.1" transform="rotate(1.2 1342.1 1186.9)"/><ellipse cx="1391.7" cy="1199.3" rx="14.3" ry="3.2" transform="rotate(1.6 1391.7 1199.3)"/><ellipse cx="1443.9" cy="1212.3" rx="14.7" ry="3.4" transform="rotate(1.9 1443.9 1212.3)"/><ellipse cx="1498.7" cy="1226.0" rx="15.1" ry="3.6" transform="rotate(2.3 1498.7 1226.0)"/><ellipse cx="1556.4" cy="1240.4" rx="15.6" ry="3.7" transform="rotate(2.7 1556.4 1240.4)"/><ellipse cx="1617.3" cy="1255.5" rx="16.1" ry="3.9" transform="rotate(3.2 1617.3 1255.5)"/><ellipse cx="1681.5" cy="1271.6" rx="16.7" ry="4.1" transform="rotate(3.6 1681.5 1271.6)"/><ellipse cx="1749.4" cy="1288.5" rx="17.3" ry="4.3" transform="rotate(4.2 1749.4 1288.5)"/><ellipse cx="1821.3" cy="1306.4" rx="17.9" ry="4.5" transform="rotate(4.7 1821.3 1306.4)"/><ellipse cx="1897.5" cy="1325.4" rx="18.7" ry="4.8" transform="rotate(5.3 1897.5 1325.4)"/><ellipse cx="1978.6" cy="1345.6" rx="19.5" ry="5.0" transform="rotate(5.9 1978.6 1345.6)"/><ellipse cx="2064.8" cy="1367.1" rx="20.4" ry="5.2" transform="rotate(6.5 2064.8 1367.1)"/><ellipse cx="2156.9" cy="1390.1" rx="21.5" ry="5.5" transform="rotate(7.2 2156.9 1390.1)"/><ellipse cx="2255.3" cy="1414.6" rx="22.6" ry="5.8" transform="rotate(7.9 2255.3 1414.6)"/><ellipse cx="1199.3" cy="1172.9" rx="13.5" ry="2.9" transform="rotate(0.4 1199.3 1172.9)"/><ellipse cx="1244.2" cy="1184.6" rx="13.8" ry="3.1" transform="rotate(0.7 1244.2 1184.6)"/><ellipse cx="1291.3" cy="1196.9" rx="14.2" ry="3.2" transform="rotate(1.0 1291.3 1196.9)"/><ellipse cx="1340.6" cy="1209.8" rx="14.5" ry="3.4" transform="rotate(1.3 1340.6 1209.8)"/><ellipse cx="1392.6" cy="1223.3" rx="14.9" ry="3.5" transform="rotate(1.6 1392.6 1223.3)"/><ellipse cx="1447.2" cy="1237.6" rx="15.4" ry="3.7" transform="rotate(2.0 1447.2 1237.6)"/><ellipse cx="1504.8" cy="1252.6" rx="15.9" ry="3.9" transform="rotate(2.5 1504.8 1252.6)"/><ellipse cx="1565.5" cy="1268.4" rx="16.4" ry="4.1" transform="rotate(2.9 1565.5 1268.4)"/><ellipse cx="1629.8" cy="1285.2" rx="17.0" ry="4.3" transform="rotate(3.4 1629.8 1285.2)"/><ellipse cx="1697.7" cy="1302.9" rx="17.6" ry="4.5" transform="rotate(4.0 1697.7 1302.9)"/><ellipse cx="1769.8" cy="1321.7" rx="18.3" ry="4.8" transform="rotate(4.5 1769.8 1321.7)"/><ellipse cx="1846.4" cy="1341.7" rx="19.0" ry="5.0" transform="rotate(5.2 1846.4 1341.7)"/><ellipse cx="1927.9" cy="1362.9" rx="19.9" ry="5.3" transform="rotate(5.8 1927.9 1362.9)"/><ellipse cx="2014.8" cy="1385.6" rx="20.8" ry="5.6" transform="rotate(6.5 2014.8 1385.6)"/><ellipse cx="2107.7" cy="1409.8" rx="21.9" ry="5.9" transform="rotate(7.2 2107.7 1409.8)"/><ellipse cx="2207.2" cy="1435.7" rx="23.1" ry="6.2" transform="rotate(8.0 2207.2 1435.7)"/><ellipse cx="1147.2" cy="1182.3" rx="13.7" ry="3.1" transform="rotate(0.1 1147.2 1182.3)"/><ellipse cx="1191.7" cy="1194.5" rx="14.1" ry="3.2" transform="rotate(0.3 1191.7 1194.5)"/><ellipse cx="1238.4" cy="1207.2" rx="14.4" ry="3.4" transform="rotate(0.6 1238.4 1207.2)"/><ellipse cx="1287.4" cy="1220.7" rx="14.8" ry="3.5" transform="rotate(1.0 1287.4 1220.7)"/><ellipse cx="1339.1" cy="1234.8" rx="15.2" ry="3.7" transform="rotate(1.3 1339.1 1234.8)"/><ellipse cx="1393.4" cy="1249.6" rx="15.7" ry="3.9" transform="rotate(1.7 1393.4 1249.6)"/><ellipse cx="1450.8" cy="1265.3" rx="16.2" ry="4.1" transform="rotate(2.2 1450.8 1265.3)"/><ellipse cx="1511.5" cy="1281.9" rx="16.7" ry="4.3" transform="rotate(2.7 1511.5 1281.9)"/><ellipse cx="1575.6" cy="1299.4" rx="17.3" ry="4.5" transform="rotate(3.2 1575.6 1299.4)"/><ellipse cx="1643.6" cy="1318.0" rx="17.9" ry="4.8" transform="rotate(3.7 1643.6 1318.0)"/><ellipse cx="1715.8" cy="1337.7" rx="18.6" ry="5.1" transform="rotate(4.3 1715.8 1337.7)"/><ellipse cx="1792.7" cy="1358.7" rx="19.4" ry="5.3" transform="rotate(5.0 1792.7 1358.7)"/><ellipse cx="1874.6" cy="1381.1" rx="20.2" ry="5.6" transform="rotate(5.7 1874.6 1381.1)"/><ellipse cx="1962.1" cy="1405.0" rx="21.2" ry="5.9" transform="rotate(6.4 1962.1 1405.0)"/><ellipse cx="2055.7" cy="1430.6" rx="22.3" ry="6.3" transform="rotate(7.2 2055.7 1430.6)"/><ellipse cx="2156.2" cy="1458.1" rx="23.5" ry="6.6" transform="rotate(8.0 2156.2 1458.1)"/><ellipse cx="2264.4" cy="1487.6" rx="24.9" ry="7.0" transform="rotate(8.8 2264.4 1487.6)"/><ellipse cx="1093.1" cy="1192.1" rx="14.0" ry="3.2" transform="rotate(-0.3 1093.1 1192.1)"/><ellipse cx="1137.1" cy="1204.8" rx="14.3" ry="3.3" transform="rotate(0.0 1137.1 1204.8)"/><ellipse cx="1183.3" cy="1218.0" rx="14.7" ry="3.5" transform="rotate(0.3 1183.3 1218.0)"/><ellipse cx="1232.0" cy="1232.0" rx="15.1" ry="3.7" transform="rotate(0.6 1232.0 1232.0)"/><ellipse cx="1283.3" cy="1246.7" rx="15.5" ry="3.9" transform="rotate(1.0 1283.3 1246.7)"/><ellipse cx="1337.3" cy="1262.2" rx="16.0" ry="4.1" transform="rotate(1.4 1337.3 1262.2)"/><ellipse cx="1394.4" cy="1278.6" rx="16.5" ry="4.3" transform="rotate(1.9 1394.4 1278.6)"/><ellipse cx="1454.8" cy="1296.0" rx="17.0" ry="4.5" transform="rotate(2.3 1454.8 1296.0)"/><ellipse cx="1518.9" cy="1314.3" rx="17.6" ry="4.8" transform="rotate(2.9 1518.9 1314.3)"/><ellipse cx="1586.8" cy="1333.8" rx="18.2" ry="5.1" transform="rotate(3.5 1586.8 1333.8)"/><ellipse cx="1659.1" cy="1354.6" rx="19.0" ry="5.3" transform="rotate(4.1 1659.1 1354.6)"/><ellipse cx="1736.1" cy="1376.7" rx="19.8" ry="5.7" transform="rotate(4.8 1736.1 1376.7)"/><ellipse cx="1818.3" cy="1400.3" rx="20.6" ry="6.0" transform="rotate(5.5 1818.3 1400.3)"/><ellipse cx="1906.3" cy="1425.6" rx="21.6" ry="6.3" transform="rotate(6.3 1906.3 1425.6)"/><ellipse cx="2000.7" cy="1452.7" rx="22.8" ry="6.7" transform="rotate(7.1 2000.7 1452.7)"/><ellipse cx="2102.2" cy="1481.8" rx="24.0" ry="7.1" transform="rotate(8.0 2102.2 1481.8)"/><ellipse cx="2211.6" cy="1513.2" rx="25.5" ry="7.5" transform="rotate(8.9 2211.6 1513.2)"/><ellipse cx="1036.7" cy="1202.3" rx="14.3" ry="3.3" transform="rotate(-0.6 1036.7 1202.3)"/><ellipse cx="1080.3" cy="1215.4" rx="14.6" ry="3.5" transform="rotate(-0.3 1080.3 1215.4)"/><ellipse cx="1126.0" cy="1229.3" rx="15.0" ry="3.6" transform="rotate(-0.1 1126.0 1229.3)"/><ellipse cx="1174.2" cy="1243.8" rx="15.4" ry="3.8" transform="rotate(0.3 1174.2 1243.8)"/><ellipse cx="1225.0" cy="1259.2" rx="15.8" ry="4.1" transform="rotate(0.6 1225.0 1259.2)"/><ellipse cx="1278.6" cy="1275.4" rx="16.3" ry="4.3" transform="rotate(1.0 1278.6 1275.4)"/><ellipse cx="1335.4" cy="1292.6" rx="16.8" ry="4.5" transform="rotate(1.5 1335.4 1292.6)"/><ellipse cx="1395.5" cy="1310.7" rx="17.4" ry="4.8" transform="rotate(2.0 1395.5 1310.7)"/><ellipse cx="1459.3" cy="1330.0" rx="18.0" ry="5.1" transform="rotate(2.5 1459.3 1330.0)"/><ellipse cx="1527.1" cy="1350.5" rx="18.6" ry="5.3" transform="rotate(3.1 1527.1 1350.5)"/><ellipse cx="1599.3" cy="1372.3" rx="19.3" ry="5.7" transform="rotate(3.8 1599.3 1372.3)"/><ellipse cx="1676.4" cy="1395.6" rx="20.2" ry="6.0" transform="rotate(4.5 1676.4 1395.6)"/><ellipse cx="1758.9" cy="1420.6" rx="21.1" ry="6.4" transform="rotate(5.3 1758.9 1420.6)"/><ellipse cx="1847.3" cy="1447.3" rx="22.1" ry="6.8" transform="rotate(6.1 1847.3 1447.3)"/><ellipse cx="1942.3" cy="1476.0" rx="23.3" ry="7.2" transform="rotate(7.0 1942.3 1476.0)"/><ellipse cx="2044.7" cy="1507.0" rx="24.6" ry="7.6" transform="rotate(8.0 2044.7 1507.0)"/><ellipse cx="2155.4" cy="1540.5" rx="26.1" ry="8.1" transform="rotate(9.0 2155.4 1540.5)"/><ellipse cx="978.2" cy="1212.9" rx="14.6" ry="3.4" transform="rotate(-1.0 978.2 1212.9)"/><ellipse cx="1021.1" cy="1226.6" rx="15.0" ry="3.6" transform="rotate(-0.7 1021.1 1226.6)"/><ellipse cx="1066.2" cy="1241.0" rx="15.3" ry="3.8" transform="rotate(-0.5 1066.2 1241.0)"/><ellipse cx="1113.8" cy="1256.2" rx="15.7" ry="4.0" transform="rotate(-0.1 1113.8 1256.2)"/><ellipse cx="1164.1" cy="1272.2" rx="16.2" ry="4.2" transform="rotate(0.2 1164.1 1272.2)"/><ellipse cx="1217.3" cy="1289.2" rx="16.7" ry="4.5" transform="rotate(0.6 1217.3 1289.2)"/><ellipse cx="1273.6" cy="1307.2" rx="17.2" ry="4.7" transform="rotate(1.1 1273.6 1307.2)"/><ellipse cx="1333.3" cy="1326.2" rx="17.7" ry="5.0" transform="rotate(1.6 1333.3 1326.2)"/><ellipse cx="1396.7" cy="1346.5" rx="18.3" ry="5.3" transform="rotate(2.1 1396.7 1346.5)"/><ellipse cx="1464.3" cy="1368.0" rx="19.0" ry="5.7" transform="rotate(2.7 1464.3 1368.0)"/><ellipse cx="1536.3" cy="1391.1" rx="19.8" ry="6.0" transform="rotate(3.4 1536.3 1391.1)"/><ellipse cx="1613.4" cy="1415.7" rx="20.6" ry="6.4" transform="rotate(4.2 1613.4 1415.7)"/><ellipse cx="1696.0" cy="1442.0" rx="21.5" ry="6.8" transform="rotate(5.0 1696.0 1442.0)"/><ellipse cx="1784.7" cy="1470.3" rx="22.6" ry="7.2" transform="rotate(5.9 1784.7 1470.3)"/><ellipse cx="1880.3" cy="1500.9" rx="23.8" ry="7.7" transform="rotate(6.9 1880.3 1500.9)"/><ellipse cx="1983.6" cy="1533.8" rx="25.1" ry="8.2" transform="rotate(7.9 1983.6 1533.8)"/><ellipse cx="917.1" cy="1223.9" rx="14.9" ry="3.6" transform="rotate(-1.4 917.1 1223.9)"/><ellipse cx="959.4" cy="1238.1" rx="15.3" ry="3.8" transform="rotate(-1.2 959.4 1238.1)"/><ellipse cx="1003.8" cy="1253.2" rx="15.7" ry="4.0" transform="rotate(-0.9 1003.8 1253.2)"/><ellipse cx="1050.8" cy="1269.1" rx="16.1" ry="4.2" transform="rotate(-0.6 1050.8 1269.1)"/><ellipse cx="1100.4" cy="1285.9" rx="16.6" ry="4.4" transform="rotate(-0.2 1100.4 1285.9)"/><ellipse cx="1153.0" cy="1303.6" rx="17.0" ry="4.7" transform="rotate(0.1 1153.0 1303.6)"/><ellipse cx="1208.7" cy="1322.5" rx="17.6" ry="5.0" transform="rotate(0.6 1208.7 1322.5)"/><ellipse cx="1267.9" cy="1342.5" rx="18.1" ry="5.3" transform="rotate(1.1 1267.9 1342.5)"/><ellipse cx="1330.9" cy="1363.8" rx="18.8" ry="5.6" transform="rotate(1.6 1330.9 1363.8)"/><ellipse cx="1398.1" cy="1386.5" rx="19.4" ry="6.0" transform="rotate(2.3 1398.1 1386.5)"/><ellipse cx="1469.9" cy="1410.8" rx="20.2" ry="6.4" transform="rotate(3.0 1469.9 1410.8)"/><ellipse cx="1546.8" cy="1436.8" rx="21.1" ry="6.8" transform="rotate(3.8 1546.8 1436.8)"/><ellipse cx="1629.4" cy="1464.8" rx="22.0" ry="7.3" transform="rotate(4.7 1629.4 1464.8)"/><ellipse cx="1718.3" cy="1494.8" rx="23.1" ry="7.7" transform="rotate(5.6 1718.3 1494.8)"/><ellipse cx="1814.3" cy="1527.3" rx="24.3" ry="8.3" transform="rotate(6.7 1814.3 1527.3)"/><ellipse cx="853.5" cy="1235.3" rx="15.3" ry="3.7" transform="rotate(-1.8 853.5 1235.3)"/><ellipse cx="895.0" cy="1250.2" rx="15.7" ry="3.9" transform="rotate(-1.6 895.0 1250.2)"/><ellipse cx="938.7" cy="1266.0" rx="16.1" ry="4.1" transform="rotate(-1.4 938.7 1266.0)"/><ellipse cx="984.9" cy="1282.6" rx="16.5" ry="4.4" transform="rotate(-1.1 984.9 1282.6)"/><ellipse cx="1033.7" cy="1300.1" rx="17.0" ry="4.6" transform="rotate(-0.8 1033.7 1300.1)"/><ellipse cx="1085.6" cy="1318.8" rx="17.5" ry="4.9" transform="rotate(-0.4 1085.6 1318.8)"/><ellipse cx="1140.6" cy="1338.6" rx="18.0" ry="5.2" transform="rotate(0.0 1140.6 1338.6)"/><ellipse cx="1199.1" cy="1359.6" rx="18.6" ry="5.6" transform="rotate(0.5 1199.1 1359.6)"/><ellipse cx="1261.5" cy="1382.0" rx="19.2" ry="5.9" transform="rotate(1.1 1261.5 1382.0)"/><ellipse cx="1328.2" cy="1406.0" rx="19.9" ry="6.3" transform="rotate(1.7 1328.2 1406.0)"/><ellipse cx="1399.6" cy="1431.7" rx="20.7" ry="6.8" transform="rotate(2.5 1399.6 1431.7)"/><ellipse cx="1476.2" cy="1459.2" rx="21.6" ry="7.2" transform="rotate(3.3 1476.2 1459.2)"/><ellipse cx="1558.6" cy="1488.9" rx="22.5" ry="7.8" transform="rotate(4.2 1558.6 1488.9)"/><ellipse cx="1647.6" cy="1520.9" rx="23.6" ry="8.3" transform="rotate(5.2 1647.6 1520.9)"/><ellipse cx="1743.9" cy="1555.5" rx="24.9" ry="8.9" transform="rotate(6.4 1743.9 1555.5)"/><ellipse cx="787.2" cy="1247.3" rx="15.7" ry="3.8" transform="rotate(-2.3 787.2 1247.3)"/><ellipse cx="827.7" cy="1262.9" rx="16.1" ry="4.1" transform="rotate(-2.1 827.7 1262.9)"/><ellipse cx="870.5" cy="1279.3" rx="16.5" ry="4.3" transform="rotate(-1.9 870.5 1279.3)"/><ellipse cx="915.8" cy="1296.7" rx="16.9" ry="4.6" transform="rotate(-1.6 915.8 1296.7)"/><ellipse cx="963.8" cy="1315.1" rx="17.4" ry="4.9" transform="rotate(-1.3 963.8 1315.1)"/><ellipse cx="1014.8" cy="1334.7" rx="17.9" ry="5.2" transform="rotate(-1.0 1014.8 1334.7)"/><ellipse cx="1069.0" cy="1355.5" rx="18.5" ry="5.5" transform="rotate(-0.5 1069.0 1355.5)"/><ellipse cx="1126.7" cy="1377.6" rx="19.1" ry="5.9" transform="rotate(-0.1 1126.7 1377.6)"/><ellipse cx="1188.4" cy="1401.3" rx="19.7" ry="6.3" transform="rotate(0.5 1188.4 1401.3)"/><ellipse cx="1254.4" cy="1426.6" rx="20.4" ry="6.7" transform="rotate(1.1 1254.4 1426.6)"/><ellipse cx="1325.2" cy="1453.8" rx="21.2" ry="7.2" transform="rotate(1.9 1325.2 1453.8)"/><ellipse cx="1401.3" cy="1483.0" rx="22.1" ry="7.7" transform="rotate(2.7 1401.3 1483.0)"/><ellipse cx="1483.4" cy="1514.5" rx="23.1" ry="8.3" transform="rotate(3.7 1483.4 1514.5)"/><ellipse cx="1572.3" cy="1548.6" rx="24.2" ry="8.9" transform="rotate(4.8 1572.3 1548.6)"/><ellipse cx="718.0" cy="1259.8" rx="16.1" ry="4.0" transform="rotate(-2.8 718.0 1259.8)"/><ellipse cx="757.5" cy="1276.1" rx="16.5" ry="4.2" transform="rotate(-2.6 757.5 1276.1)"/><ellipse cx="799.2" cy="1293.3" rx="17.0" ry="4.5" transform="rotate(-2.4 799.2 1293.3)"/><ellipse cx="843.5" cy="1311.5" rx="17.4" ry="4.8" transform="rotate(-2.2 843.5 1311.5)"/><ellipse cx="890.5" cy="1330.8" rx="17.9" ry="5.1" transform="rotate(-1.9 890.5 1330.8)"/><ellipse cx="940.4" cy="1351.4" rx="18.4" ry="5.4" transform="rotate(-1.6 940.4 1351.4)"/><ellipse cx="993.6" cy="1373.3" rx="19.0" ry="5.8" transform="rotate(-1.2 993.6 1373.3)"/><ellipse cx="1050.4" cy="1396.6" rx="19.6" ry="6.2" transform="rotate(-0.8 1050.4 1396.6)"/><ellipse cx="1111.1" cy="1421.6" rx="20.3" ry="6.7" transform="rotate(-0.2 1111.1 1421.6)"/><ellipse cx="1176.2" cy="1448.4" rx="21.0" ry="7.1" transform="rotate(0.4 1176.2 1448.4)"/><ellipse cx="1246.2" cy="1477.2" rx="21.8" ry="7.7" transform="rotate(1.1 1246.2 1477.2)"/><ellipse cx="1321.7" cy="1508.3" rx="22.7" ry="8.3" transform="rotate(2.0 1321.7 1508.3)"/><ellipse cx="1403.3" cy="1541.9" rx="23.7" ry="8.9" transform="rotate(3.0 1403.3 1541.9)"/><ellipse cx="645.6" cy="1272.9" rx="16.6" ry="4.1" transform="rotate(-3.3 645.6 1272.9)"/><ellipse cx="683.9" cy="1289.9" rx="17.0" ry="4.4" transform="rotate(-3.2 683.9 1289.9)"/><ellipse cx="724.5" cy="1307.9" rx="17.5" ry="4.7" transform="rotate(-3.0 724.5 1307.9)"/><ellipse cx="767.6" cy="1327.0" rx="17.9" ry="5.0" transform="rotate(-2.8 767.6 1327.0)"/><ellipse cx="813.4" cy="1347.3" rx="18.4" ry="5.3" transform="rotate(-2.6 813.4 1347.3)"/><ellipse cx="862.1" cy="1368.9" rx="19.0" ry="5.7" transform="rotate(-2.3 862.1 1368.9)"/><ellipse cx="914.1" cy="1392.0" rx="19.6" ry="6.1" transform="rotate(-1.9 914.1 1392.0)"/><ellipse cx="969.7" cy="1416.7" rx="20.2" ry="6.5" transform="rotate(-1.5 969.7 1416.7)"/><ellipse cx="1029.4" cy="1443.1" rx="20.9" ry="7.0" transform="rotate(-1.0 1029.4 1443.1)"/><ellipse cx="1093.4" cy="1471.5" rx="21.6" ry="7.6" transform="rotate(-0.4 1093.4 1471.5)"/><ellipse cx="1162.4" cy="1502.1" rx="22.5" ry="8.2" transform="rotate(0.3 1162.4 1502.1)"/><ellipse cx="1236.9" cy="1535.2" rx="23.4" ry="8.8" transform="rotate(1.1 1236.9 1535.2)"/><ellipse cx="569.9" cy="1286.6" rx="17.1" ry="4.3" transform="rotate(-3.9 569.9 1286.6)"/><ellipse cx="606.9" cy="1304.4" rx="17.6" ry="4.6" transform="rotate(-3.8 606.9 1304.4)"/><ellipse cx="646.2" cy="1323.3" rx="18.0" ry="4.9" transform="rotate(-3.6 646.2 1323.3)"/><ellipse cx="687.9" cy="1343.3" rx="18.5" ry="5.2" transform="rotate(-3.5 687.9 1343.3)"/><ellipse cx="732.3" cy="1364.7" rx="19.0" ry="5.6" transform="rotate(-3.3 732.3 1364.7)"/><ellipse cx="779.6" cy="1387.5" rx="19.6" ry="6.0" transform="rotate(-3.0 779.6 1387.5)"/><ellipse cx="830.3" cy="1411.8" rx="20.2" ry="6.4" transform="rotate(-2.7 830.3 1411.8)"/><ellipse cx="884.5" cy="1437.9" rx="20.8" ry="6.9" transform="rotate(-2.4 884.5 1437.9)"/><ellipse cx="942.7" cy="1465.9" rx="21.6" ry="7.4" transform="rotate(-1.9 942.7 1465.9)"/><ellipse cx="1005.4" cy="1496.1" rx="22.3" ry="8.0" transform="rotate(-1.4 1005.4 1496.1)"/><ellipse cx="1073.1" cy="1528.7" rx="23.2" ry="8.7" transform="rotate(-0.7 1073.1 1528.7)"/><ellipse cx="490.6" cy="1300.9" rx="17.7" ry="4.5" transform="rotate(-4.4 490.6 1300.9)"/><ellipse cx="526.1" cy="1319.5" rx="18.1" ry="4.8" transform="rotate(-4.4 526.1 1319.5)"/><ellipse cx="563.9" cy="1339.4" rx="18.6" ry="5.1" transform="rotate(-4.3 563.9 1339.4)"/><ellipse cx="604.0" cy="1360.5" rx="19.1" ry="5.4" transform="rotate(-4.2 604.0 1360.5)"/><ellipse cx="646.8" cy="1383.0" rx="19.7" ry="5.8" transform="rotate(-4.0 646.8 1383.0)"/><ellipse cx="692.6" cy="1407.0" rx="20.3" ry="6.3" transform="rotate(-3.8 692.6 1407.0)"/><ellipse cx="741.6" cy="1432.8" rx="20.9" ry="6.7" transform="rotate(-3.6 741.6 1432.8)"/><ellipse cx="794.2" cy="1460.4" rx="21.6" ry="7.3" transform="rotate(-3.3 794.2 1460.4)"/><ellipse cx="850.7" cy="1490.1" rx="22.3" ry="7.9" transform="rotate(-2.9 850.7 1490.1)"/><ellipse cx="911.8" cy="1522.2" rx="23.1" ry="8.5" transform="rotate(-2.4 911.8 1522.2)"/><ellipse cx="977.9" cy="1556.9" rx="24.0" ry="9.3" transform="rotate(-1.8 977.9 1556.9)"/><ellipse cx="407.5" cy="1315.9" rx="18.3" ry="4.6" transform="rotate(-5.0 407.5 1315.9)"/><ellipse cx="441.3" cy="1335.5" rx="18.8" ry="4.9" transform="rotate(-5.0 441.3 1335.5)"/><ellipse cx="477.4" cy="1356.3" rx="19.3" ry="5.3" transform="rotate(-5.0 477.4 1356.3)"/><ellipse cx="515.7" cy="1378.5" rx="19.9" ry="5.7" transform="rotate(-4.9 515.7 1378.5)"/><ellipse cx="556.7" cy="1402.3" rx="20.4" ry="6.1" transform="rotate(-4.8 556.7 1402.3)"/><ellipse cx="600.6" cy="1427.7" rx="21.1" ry="6.6" transform="rotate(-4.7 600.6 1427.7)"/><ellipse cx="647.7" cy="1454.9" rx="21.7" ry="7.1" transform="rotate(-4.5 647.7 1454.9)"/><ellipse cx="698.3" cy="1484.2" rx="22.4" ry="7.7" transform="rotate(-4.3 698.3 1484.2)"/><ellipse cx="752.9" cy="1515.9" rx="23.2" ry="8.3" transform="rotate(-4.0 752.9 1515.9)"/><ellipse cx="812.0" cy="1550.1" rx="24.1" ry="9.0" transform="rotate(-3.6 812.0 1550.1)"/><ellipse cx="320.2" cy="1331.6" rx="19.0" ry="4.8" transform="rotate(-5.6 320.2 1331.6)"/><ellipse cx="352.2" cy="1352.2" rx="19.5" ry="5.1" transform="rotate(-5.7 352.2 1352.2)"/><ellipse cx="386.3" cy="1374.2" rx="20.1" ry="5.5" transform="rotate(-5.7 386.3 1374.2)"/><ellipse cx="422.6" cy="1397.6" rx="20.6" ry="5.9" transform="rotate(-5.7 422.6 1397.6)"/><ellipse cx="461.5" cy="1422.7" rx="21.3" ry="6.4" transform="rotate(-5.6 461.5 1422.7)"/><ellipse cx="503.2" cy="1449.5" rx="21.9" ry="6.9" transform="rotate(-5.6 503.2 1449.5)"/><ellipse cx="548.1" cy="1478.4" rx="22.6" ry="7.4" transform="rotate(-5.5 548.1 1478.4)"/><ellipse cx="596.4" cy="1509.6" rx="23.4" ry="8.1" transform="rotate(-5.4 596.4 1509.6)"/><ellipse cx="648.7" cy="1543.3" rx="24.2" ry="8.8" transform="rotate(-5.2 648.7 1543.3)"/><ellipse cx="228.6" cy="1348.2" rx="19.8" ry="5.0" transform="rotate(-6.2 228.6 1348.2)"/><ellipse cx="258.4" cy="1369.8" rx="20.3" ry="5.3" transform="rotate(-6.3 258.4 1369.8)"/><ellipse cx="290.2" cy="1393.0" rx="20.9" ry="5.7" transform="rotate(-6.4 290.2 1393.0)"/><ellipse cx="324.3" cy="1417.7" rx="21.5" ry="6.2" transform="rotate(-6.5 324.3 1417.7)"/><ellipse cx="360.8" cy="1444.2" rx="22.2" ry="6.6" transform="rotate(-6.5 360.8 1444.2)"/><ellipse cx="400.0" cy="1472.7" rx="22.9" ry="7.2" transform="rotate(-6.5 400.0 1472.7)"/><ellipse cx="442.2" cy="1503.4" rx="23.7" ry="7.8" transform="rotate(-6.5 442.2 1503.4)"/><ellipse cx="487.9" cy="1536.6" rx="24.5" ry="8.5" transform="rotate(-6.5 487.9 1536.6)"/><ellipse cx="132.1" cy="1365.6" rx="20.6" ry="5.2" transform="rotate(-6.9 132.1 1365.6)"/><ellipse cx="159.6" cy="1388.4" rx="21.2" ry="5.5" transform="rotate(-7.0 159.6 1388.4)"/><ellipse cx="188.9" cy="1412.8" rx="21.9" ry="5.9" transform="rotate(-7.1 188.9 1412.8)"/><ellipse cx="220.3" cy="1439.0" rx="22.5" ry="6.4" transform="rotate(-7.3 220.3 1439.0)"/><ellipse cx="254.0" cy="1467.1" rx="23.3" ry="6.9" transform="rotate(-7.4 254.0 1467.1)"/><ellipse cx="290.3" cy="1497.4" rx="24.0" ry="7.5" transform="rotate(-7.5 290.3 1497.4)"/><ellipse cx="329.6" cy="1530.0" rx="24.8" ry="8.2" transform="rotate(-7.6 329.6 1530.0)"/><ellipse cx="55.2" cy="1408.0" rx="22.2" ry="5.7" transform="rotate(-7.7 55.2 1408.0)"/><ellipse cx="81.7" cy="1433.8" rx="22.9" ry="6.2" transform="rotate(-7.9 81.7 1433.8)"/><ellipse cx="110.1" cy="1461.5" rx="23.7" ry="6.7" transform="rotate(-8.1 110.1 1461.5)"/><ellipse cx="140.6" cy="1491.4" rx="24.4" ry="7.2" transform="rotate(-8.3 140.6 1491.4)"/><ellipse cx="173.6" cy="1523.6" rx="25.3" ry="7.8" transform="rotate(-8.5 173.6 1523.6)"/><ellipse cx="209.4" cy="1558.4" rx="26.2" ry="8.5" transform="rotate(-8.7 209.4 1558.4)"/><ellipse cx="49.2" cy="1551.5" rx="26.7" ry="8.2" transform="rotate(-9.5 49.2 1551.5)"/></g><path d="M256 1390 L460 1541" stroke="#9a9a9a" stroke-width="1.2"/><path d="M1196 1541 L1560 1426" stroke="#7be07a" stroke-width="1.6"/><path d="M486 1304 L508 1295.4 L600 1296 L600 1309 L486 1306 Z" fill="#2a2a2a"/><path d="M500 1301 L512 1297.5 L600 1298 L600 1305 Z" fill="#a8a8a8"/><path d="M486 1305 L600 1309 L600 1329 L486 1324 Z" fill="url(#barg)"/><path d="M790 1283 L893 1277 C903 1277 906 1283 903 1290 L903 1306 L792 1331 L780 1325 Z" fill="#b4b4b4"/><path d="M790 1283 L893 1277 C903 1277 906 1283 903 1290 L800 1300 Z" fill="#1e1e1e"/><path d="M836 1284 L888 1280 C893 1280 893 1285 888 1287 L836 1291 Z" fill="#c8c8c8"/><rect x="505.0" y="1262.0" width="40" height="42" rx="9" fill="#2b2621"/><ellipse cx="525.0" cy="1268.0" rx="17.0" ry="5" fill="#3a342e"/><rect x="506.0" y="1285.1" width="38" height="3" fill="#1a1714"/><rect x="823.6" y="1254.8" width="38" height="41" rx="9" fill="#2b2621"/><ellipse cx="842.6" cy="1260.8" rx="16.0" ry="5" fill="#3a342e"/><rect x="824.6" y="1277.3" width="36" height="3" fill="#1a1714"/><path d="M593.7 1297 L810 1288.8 L805.8 1322.4 L784.8 1324.5 L758.6 1322.4 L739.7 1343.4 L706 1345.5 L674.5 1348.7 L642 1345.5 L622 1341.3 L593.7 1340.3 Z" fill="#9c9c9c"/><rect x="593.7" y="1297.0" width="27.3" height="44.0" fill="url(#post)"/><rect x="678.7" y="1303.5" width="28.3" height="42.0" fill="url(#post)"/><rect x="720.0" y="1300.0" width="20.0" height="43.0" fill="url(#post)"/><rect x="781.7" y="1280.4" width="24.1" height="44.1" fill="url(#post)"/><rect x="745.0" y="1296.0" width="15.0" height="26.0" fill="url(#post)"/><path d="M642 1320 L678 1322 L678 1348 L642 1345 Z" fill="#8a8a8a"/><path d="M683 1243.7 L737.6 1253 L753.3 1274 L704 1274 Z" fill="#a4a4a4"/><path d="M704 1262 L753 1262 L760 1282 L704 1282 Z" fill="#b2b2b2"/><path d="M593.7 1295 L601 1282.5 L616.8 1274 L643 1265.7 L674.5 1261.5 L706 1264.7 L732.3 1270 L758.6 1276.2 L795.3 1274 L811 1279.4 L810 1288.8 L758.6 1298.3 L737.6 1303.5 L700.8 1306.7 L674.5 1303.5 L643 1299.3 L611.5 1297.2 L593.7 1297.2 Z" fill="#1c1c1c"/><path d="M638.8 1274 C660 1268 700 1268 727 1276 C735 1280 730 1288 727 1288.8 C700 1294 660 1294 645 1290 C635 1286 632 1278 638.8 1274 Z" fill="#a6a6a6"/><rect x="666" y="1280.4" width="41" height="17" rx="6" fill="#2b2621"/><ellipse cx="686.6" cy="1282" rx="19" ry="4.5" fill="#3a342e"/><ellipse cx="607.3" cy="1295.1" rx="5.5" ry="2" fill="#cfcfcf"/><ellipse cx="693.4" cy="1303.5" rx="5.5" ry="2" fill="#cfcfcf"/><ellipse cx="745.0" cy="1296.2" rx="5.5" ry="2" fill="#cfcfcf"/><ellipse cx="793.2" cy="1278.3" rx="5.5" ry="2" fill="#cfcfcf"/><path d="M612 1286 C622 1296 645 1300 670 1299 L668 1294 C650 1293 638 1288 632 1278 L628 1272 C620 1275 614 1280 612 1286 Z" fill="#d8203c"/><path d="M660 1252 L700 1255 L702 1264 L665 1262 Z" fill="#d8203c"/><path d="M810 1282 L826 1280 L826 1290 L812 1292 Z" fill="#d8203c"/><path d="M607 1258.6 L626 1252 L651 1247 L660 1250 L690 1270 M748 1241.5 L815 1255 L818 1286 M612 1262 C615 1275 640 1290 660 1292 M760 1280 L790 1275 L818 1286" fill="none" stroke="#22b8ef" stroke-width="1.8"/><circle cx="607" cy="1258" r="3.5" fill="#2bc8f6"/><circle cx="652" cy="1248" r="3.0" fill="#2bc8f6"/><circle cx="691" cy="1270" r="3.5" fill="#2bc8f6"/><circle cx="748" cy="1241" r="3.5" fill="#2bc8f6"/><circle cx="818" cy="1253" r="3.5" fill="#2bc8f6"/><circle cx="818" cy="1286" r="3.5" fill="#2bc8f6"/><circle cx="763" cy="1277" r="2.5" fill="#2bc8f6"/><circle cx="802" cy="1273" r="2.5" fill="#2bc8f6"/><circle cx="624" cy="1268" r="3" fill="#a020f0"/><path d="M625 1268 L625 1310 M748 1245 L748 1265 M816 1290 L816 1305" stroke="#6a5acd" stroke-width="1.2"/><path d="M614 1243 C640 1236 680 1228 697 1230 C710 1232 735 1238 748 1241 M702.6 1241.5 L903 1133 L818 1251 M903 1133 L1034.5 1159 L1104 1160 L1149 1176.5 L1151 1195 M903 1133 L1018 1169.7" fill="none" stroke="#1a4652" stroke-width="1.5" opacity="0.85"/><path d="M790 1198 L800 1190 L798 1205 Z M860 1186 L868 1176 L870 1192 Z M1000 1160 L1008 1152 L1010 1168 Z M1040 1160 L1048 1152 L1050 1168 Z" fill="#14301a" opacity="0.7"/><path d="M929.6 1270.6 L940 1264 L1025 1249 L1056 1255.8 L1056 1274.6 L956.5 1294.8 L929.6 1289.4 Z" fill="url(#barg2)"/><path d="M929.6 1270.6 L940 1264 L1025 1249 L1056 1255.8 L958 1276 Z" fill="#202020"/><path d="M943 1269 L1025 1253 C1035 1253 1035 1258 1025 1260 L947 1275 C938 1276 938 1271 943 1269 Z" fill="#c2c2c2"/><rect x="968.6" y="1228.9" width="36" height="36" rx="8" fill="#2b2621"/><rect x="969" y="1245" width="35" height="3" fill="#16130f"/><ellipse cx="986.6" cy="1234" rx="15" ry="5" fill="#3a342e"/><path d="M974 1203 L979 1173.8 L1023.7 1165.7 L1100 1165 L1182 1173.8 L1193 1190 L1193 1249 L1166 1256 L1099 1264 L1073 1265 L1040 1270 L1010 1245 L1000 1226 L974 1224 Z" fill="#a2a2a2"/><path d="M1010 1215 L1040 1208 L1065 1200 L1085 1212 L1078 1262 L1056 1276 L1030 1252 L1005 1235 Z" fill="#5c5c5c"/><path d="M1015 1215 L1050 1212 L1058 1240 L1040 1250 Z" fill="#8a8a8a"/><ellipse cx="1127" cy="1185" rx="60" ry="13" fill="#b3b3b3" stroke="#232323" stroke-width="3"/><ellipse cx="1127" cy="1190" rx="48" ry="8" fill="#8a8a8a"/><path d="M979 1173.8 L1023.7 1165.7 L1060 1172 L1040 1182 L1000 1184 Z" fill="#262626"/><rect x="1073.4" y="1203.4" width="25.6" height="60.5" fill="url(#post)"/><ellipse cx="1086.2" cy="1203.4" rx="14.8" ry="3.5" fill="#1e1e1e"/><ellipse cx="1086.2" cy="1203.4" rx="4" ry="1.6" fill="#d0d0d0"/><rect x="1148.7" y="1199.3" width="17.5" height="56.5" fill="url(#post)"/><ellipse cx="1157.5" cy="1199.3" rx="10.8" ry="3.5" fill="#1e1e1e"/><ellipse cx="1157.5" cy="1199.3" rx="4" ry="1.6" fill="#d0d0d0"/><rect x="1169.0" y="1192.6" width="24.0" height="56.4" fill="url(#post)"/><ellipse cx="1181.0" cy="1192.6" rx="14.0" ry="3.5" fill="#1e1e1e"/><ellipse cx="1181.0" cy="1192.6" rx="4" ry="1.6" fill="#d0d0d0"/><rect x="999.0" y="1182.0" width="13.0" height="48.0" fill="url(#post)"/><ellipse cx="1005.5" cy="1182.0" rx="8.5" ry="3.5" fill="#1e1e1e"/><ellipse cx="1005.5" cy="1182.0" rx="4" ry="1.6" fill="#d0d0d0"/><path d="M974 1203 L999.5 1204 L999.5 1225 L974 1224 Z" fill="#b8b8b8"/><path d="M1100 1200 L1140 1200 L1150 1215 L1145 1235 L1100 1238 Z" fill="#b0b0b0"/><path d="M1023.7 1166 L1034.5 1159 L1104 1160 L1149 1176.5 L1151 1195 M981 1180 L1000 1190 L1030 1180" fill="none" stroke="#4a8fa5" stroke-width="1" opacity="0.7"/></g><path d="M1450 250 L1638 215 L1962 740.8 C1985 747 2005 753 2012 762 C2018 768 2018 774 2017.6 780 L1790 790 L1521 365 Z" fill="url(#ua)"/><path d="M1438 213 L1392 300 L1074.5 852.8 L1066.8 871.4 L1204.5 948 L1213.8 927 L1260 837 L1560 300 L1582 275 L1607 265 Z" fill="url(#fa)"/><path d="M1496 25 C1460 36 1425 58 1410 90 C1396 120 1395 165 1410 190 C1418 202 1428 210 1439 214 L1440 170 C1450 120 1470 70 1496 25 Z" fill="#363636"/><path d="M1496 25 C1460 36 1425 58 1410 90 C1396 120 1395 165 1410 190 C1418 202 1428 210 1439 214" fill="none" stroke="#3f7fae" stroke-width="3"/><path d="M1495 25 C1520 12 1545 12 1565 13 C1600 20 1635 45 1650 85 C1660 120 1660 170 1640 215 L1624 232 C1570 190 1500 160 1446 141 C1455 110 1470 60 1495 25 Z" fill="url(#dome)"/><path d="M1495 25 C1475 55 1458 95 1450 130" fill="none" stroke="#2a2a2a" stroke-width="3"/><path d="M1446 141 C1510 158 1575 188 1624 232 L1615 253 C1570 212 1505 180 1437 163 Z" fill="#4a4a4a"/><path d="M1437 163 C1505 180 1570 212 1615 253 L1607 265 L1582 275 L1560 300 L1545 330 L1375 330 L1392 300 L1438 213 Z" fill="url(#collar)" mask="url(#collarmask)"/><rect x="1369.7" y="42.9" width="1.2" height="1.2" fill="#1b1f23"/><rect x="1351.7" y="63.5" width="1.2" height="1.2" fill="#1b1f23"/><rect x="1348.4" y="71.4" width="1.6" height="1.6" fill="#4a5560"/><rect x="1384.8" y="28.4" width="1.2" height="1.2" fill="#1b1f23"/><rect x="1349.3" y="61.6" width="1.6" height="1.6" fill="#3f7fae"/><rect x="1375.0" y="39.2" width="1.2" height="1.2" fill="#1b1f23"/><rect x="1418.3" y="3.8" width="1.2" height="1.2" fill="#3f7fae"/><rect x="1354.9" y="52.5" width="1.6" height="1.6" fill="#1b1f23"/><rect x="1400.3" y="12.3" width="1.6" height="1.6" fill="#3f7fae"/><rect x="1361.6" y="44.0" width="1.2" height="1.2" fill="#3f7fae"/><rect x="1366.9" y="55.5" width="1.2" height="1.2" fill="#1b1f23"/><rect x="1345.6" y="74.4" width="1.2" height="1.2" fill="#1b1f23"/><rect x="1389.3" y="19.0" width="1.2" height="1.2" fill="#3f7fae"/><rect x="1362.8" y="60.0" width="1.2" height="1.2" fill="#4a5560"/><rect x="1369.3" y="50.0" width="1.2" height="1.2" fill="#4a5560"/><rect x="1358.7" y="58.9" width="1.2" height="1.2" fill="#1b1f23"/><rect x="1376.5" y="30.3" width="1.6" height="1.6" fill="#3f7fae"/><rect x="1372.1" y="40.4" width="1.6" height="1.6" fill="#1b1f23"/><rect x="1397.7" y="14.7" width="1.6" height="1.6" fill="#1b1f23"/><rect x="1405.8" y="11.9" width="1.6" height="1.6" fill="#1b1f23"/><rect x="1356.4" y="60.5" width="1.2" height="1.2" fill="#1b1f23"/><rect x="1352.4" y="64.7" width="1.6" height="1.6" fill="#1b1f23"/><rect x="1379.7" y="28.1" width="1.2" height="1.2" fill="#3f7fae"/><rect x="1364.4" y="39.6" width="1.2" height="1.2" fill="#3f7fae"/><rect x="1368.0" y="53.3" width="1.2" height="1.2" fill="#1b1f23"/><rect x="1346.1" y="66.2" width="1.2" height="1.2" fill="#4a5560"/><rect x="1382.8" y="28.5" width="1.2" height="1.2" fill="#4a5560"/><rect x="1378.6" y="38.6" width="1.2" height="1.2" fill="#1b1f23"/><rect x="1408.8" y="9.2" width="1.2" height="1.2" fill="#1b1f23"/><rect x="1404.1" y="13.4" width="1.2" height="1.2" fill="#1b1f23"/><rect x="1347.0" y="72.8" width="1.2" height="1.2" fill="#1b1f23"/><rect x="1391.8" y="23.2" width="1.2" height="1.2" fill="#1b1f23"/><rect x="1343.1" y="76.2" width="1.2" height="1.2" fill="#3f7fae"/><rect x="1385.2" y="35.6" width="1.2" height="1.2" fill="#1b1f23"/><rect x="1350.6" y="60.5" width="1.6" height="1.6" fill="#3f7fae"/><rect x="1361.6" y="53.1" width="1.6" height="1.6" fill="#4a5560"/><rect x="1405.1" y="10.9" width="1.2" height="1.2" fill="#3f7fae"/><rect x="1403.1" y="18.6" width="1.2" height="1.2" fill="#1b1f23"/><rect x="1366.0" y="40.4" width="1.2" height="1.2" fill="#3f7fae"/><rect x="1364.1" y="55.7" width="1.2" height="1.2" fill="#1b1f23"/><rect x="1403.7" y="10.3" width="1.2" height="1.2" fill="#3f7fae"/><rect x="1341.7" y="76.6" width="1.2" height="1.2" fill="#1b1f23"/><rect x="1344.2" y="75.2" width="1.6" height="1.6" fill="#3f7fae"/><rect x="1413.5" y="6.9" width="1.2" height="1.2" fill="#3f7fae"/><rect x="1372.1" y="43.0" width="1.2" height="1.2" fill="#1b1f23"/><rect x="1375.1" y="38.5" width="1.6" height="1.6" fill="#4a5560"/><rect x="1349.1" y="72.2" width="1.2" height="1.2" fill="#1b1f23"/><rect x="1408.2" y="9.6" width="1.2" height="1.2" fill="#4a5560"/><rect x="1382.3" y="25.7" width="1.2" height="1.2" fill="#3f7fae"/><rect x="1358.1" y="64.0" width="1.2" height="1.2" fill="#1b1f23"/><rect x="1365.4" y="56.0" width="1.2" height="1.2" fill="#1b1f23"/><rect x="1378.8" y="37.9" width="1.2" height="1.2" fill="#4a5560"/><rect x="1395.8" y="15.5" width="1.2" height="1.2" fill="#3f7fae"/><rect x="1376.2" y="40.5" width="1.2" height="1.2" fill="#4a5560"/><rect x="1411.7" y="5.9" width="1.2" height="1.2" fill="#3f7fae"/><rect x="1383.5" y="29.1" width="1.2" height="1.2" fill="#1b1f23"/><rect x="1403.6" y="18.3" width="1.2" height="1.2" fill="#4a5560"/><rect x="1375.3" y="30.9" width="1.2" height="1.2" fill="#3f7fae"/><rect x="1414.7" y="5.9" width="1.2" height="1.2" fill="#3f7fae"/><rect x="1385.2" y="21.8" width="1.2" height="1.2" fill="#4a5560"/><rect x="1367.0" y="38.3" width="1.2" height="1.2" fill="#1b1f23"/><rect x="1353.4" y="62.7" width="1.2" height="1.2" fill="#4a5560"/><rect x="1350.2" y="61.0" width="1.2" height="1.2" fill="#3f7fae"/><rect x="1348.1" y="70.6" width="1.2" height="1.2" fill="#1b1f23"/><rect x="1373.5" y="35.8" width="1.2" height="1.2" fill="#1b1f23"/><rect x="1354.0" y="62.3" width="1.2" height="1.2" fill="#4a5560"/><rect x="1402.4" y="12.2" width="1.2" height="1.2" fill="#1b1f23"/><rect x="1409.8" y="8.2" width="1.2" height="1.2" fill="#3f7fae"/><rect x="1388.7" y="20.9" width="1.2" height="1.2" fill="#3f7fae"/><rect x="1347.7" y="67.2" width="1.2" height="1.2" fill="#3f7fae"/><rect x="1409.7" y="12.8" width="1.2" height="1.2" fill="#4a5560"/><rect x="1384.5" y="22.4" width="1.2" height="1.2" fill="#3f7fae"/><rect x="1373.4" y="38.1" width="1.6" height="1.6" fill="#1b1f23"/><rect x="1416.8" y="4.0" width="1.2" height="1.2" fill="#1b1f23"/><rect x="1359.7" y="51.5" width="1.2" height="1.2" fill="#1b1f23"/><rect x="1390.9" y="28.5" width="1.2" height="1.2" fill="#1b1f23"/><rect x="1349.7" y="60.4" width="1.2" height="1.2" fill="#4a5560"/><rect x="1403.8" y="14.3" width="1.6" height="1.6" fill="#1b1f23"/><rect x="1397.3" y="15.6" width="1.2" height="1.2" fill="#4a5560"/><rect x="1408.7" y="13.7" width="1.2" height="1.2" fill="#4a5560"/><rect x="1387.9" y="19.8" width="1.2" height="1.2" fill="#3f7fae"/><rect x="1383.7" y="30.7" width="1.2" height="1.2" fill="#1b1f23"/><rect x="1385.3" y="27.9" width="1.2" height="1.2" fill="#4a5560"/><rect x="1391.1" y="26.9" width="1.2" height="1.2" fill="#1b1f23"/><rect x="1354.2" y="56.3" width="1.2" height="1.2" fill="#1b1f23"/><rect x="1360.2" y="60.9" width="1.2" height="1.2" fill="#4a5560"/><rect x="1417.9" y="3.1" width="1.2" height="1.2" fill="#3f7fae"/><rect x="1345.2" y="75.8" width="1.2" height="1.2" fill="#1b1f23"/><rect x="1378.5" y="27.3" width="1.2" height="1.2" fill="#3f7fae"/><rect x="1360.7" y="47.3" width="1.2" height="1.2" fill="#3f7fae"/><rect x="1354.5" y="51.4" width="1.2" height="1.2" fill="#3f7fae"/><rect x="1369.8" y="50.8" width="1.6" height="1.6" fill="#4a5560"/><rect x="1347.6" y="73.6" width="1.2" height="1.2" fill="#4a5560"/><rect x="1379.5" y="42.8" width="1.6" height="1.6" fill="#4a5560"/><rect x="1377.6" y="28.1" width="1.2" height="1.2" fill="#3f7fae"/><rect x="1371.2" y="33.9" width="1.2" height="1.2" fill="#3f7fae"/><rect x="1377.9" y="32.0" width="1.6" height="1.6" fill="#4a5560"/><rect x="1389.3" y="20.3" width="1.2" height="1.2" fill="#1b1f23"/><rect x="1358.7" y="57.6" width="1.2" height="1.2" fill="#1b1f23"/><rect x="1350.5" y="62.2" width="1.2" height="1.2" fill="#1b1f23"/><rect x="1355.9" y="55.2" width="1.2" height="1.2" fill="#1b1f23"/><rect x="1347.0" y="72.1" width="1.2" height="1.2" fill="#1b1f23"/><rect x="1351.9" y="60.7" width="1.2" height="1.2" fill="#3f7fae"/><rect x="1399.3" y="17.5" width="1.2" height="1.2" fill="#1b1f23"/><rect x="1397.9" y="16.3" width="1.2" height="1.2" fill="#3f7fae"/><rect x="1395.6" y="26.1" width="1.6" height="1.6" fill="#1b1f23"/><rect x="1344.1" y="71.5" width="1.2" height="1.2" fill="#3f7fae"/><rect x="1393.0" y="16.6" width="1.2" height="1.2" fill="#3f7fae"/><rect x="1391.6" y="24.4" width="1.2" height="1.2" fill="#1b1f23"/><rect x="1359.8" y="46.4" width="1.6" height="1.6" fill="#4a5560"/><rect x="1371.1" y="46.6" width="1.6" height="1.6" fill="#1b1f23"/><rect x="1406.0" y="9.4" width="1.2" height="1.2" fill="#3f7fae"/><rect x="1361.5" y="45.3" width="1.6" height="1.6" fill="#3f7fae"/><rect x="1374.6" y="31.9" width="1.2" height="1.2" fill="#3f7fae"/><rect x="1373.7" y="38.7" width="1.6" height="1.6" fill="#1b1f23"/><rect x="1345.3" y="73.0" width="1.2" height="1.2" fill="#3f7fae"/><rect x="1406.5" y="8.4" width="1.2" height="1.2" fill="#1b1f23"/><rect x="1356.3" y="62.2" width="1.2" height="1.2" fill="#1b1f23"/><rect x="1414.9" y="6.1" width="1.6" height="1.6" fill="#1b1f23"/><rect x="1370.0" y="49.5" width="1.6" height="1.6" fill="#4a5560"/><rect x="1408.2" y="14.8" width="1.6" height="1.6" fill="#1b1f23"/><rect x="1365.1" y="44.2" width="1.2" height="1.2" fill="#4a5560"/><rect x="1348.4" y="63.3" width="1.2" height="1.2" fill="#1b1f23"/><rect x="1348.9" y="69.1" width="1.2" height="1.2" fill="#1b1f23"/><rect x="1382.6" y="37.7" width="1.2" height="1.2" fill="#1b1f23"/><rect x="1356.8" y="60.1" width="1.2" height="1.2" fill="#1b1f23"/><rect x="1352.9" y="65.5" width="1.2" height="1.2" fill="#4a5560"/><rect x="1361.0" y="59.8" width="1.6" height="1.6" fill="#1b1f23"/><rect x="1367.8" y="38.2" width="1.2" height="1.2" fill="#1b1f23"/><rect x="1371.8" y="35.8" width="1.2" height="1.2" fill="#3f7fae"/><rect x="1369.1" y="39.8" width="1.2" height="1.2" fill="#1b1f23"/><rect x="1348.3" y="65.2" width="1.2" height="1.2" fill="#3f7fae"/><rect x="1417.3" y="3.1" width="1.6" height="1.6" fill="#1b1f23"/><rect x="1403.0" y="16.8" width="1.2" height="1.2" fill="#1b1f23"/><rect x="1370.8" y="40.0" width="1.2" height="1.2" fill="#4a5560"/><rect x="1396.4" y="16.9" width="1.2" height="1.2" fill="#4a5560"/><rect x="1375.1" y="36.3" width="1.2" height="1.2" fill="#1b1f23"/><rect x="1344.5" y="72.2" width="1.2" height="1.2" fill="#3f7fae"/><rect x="1346.3" y="70.0" width="1.2" height="1.2" fill="#1b1f23"/><rect x="1365.6" y="50.1" width="1.2" height="1.2" fill="#1b1f23"/><rect x="1417.0" y="4.3" width="1.2" height="1.2" fill="#3f7fae"/><rect x="1373.0" y="33.9" width="1.2" height="1.2" fill="#1b1f23"/><rect x="1354.4" y="63.7" width="1.2" height="1.2" fill="#1b1f23"/><rect x="1364.0" y="54.1" width="1.2" height="1.2" fill="#1b1f23"/><rect x="1387.0" y="21.7" width="1.2" height="1.2" fill="#3f7fae"/><rect x="1350.9" y="58.1" width="1.6" height="1.6" fill="#3f7fae"/><rect x="1367.0" y="44.6" width="1.2" height="1.2" fill="#4a5560"/><rect x="1358.9" y="50.7" width="1.6" height="1.6" fill="#1b1f23"/><rect x="1397.5" y="19.1" width="1.2" height="1.2" fill="#1b1f23"/><rect x="1381.4" y="24.8" width="1.2" height="1.2" fill="#4a5560"/><rect x="1352.8" y="66.6" width="1.2" height="1.2" fill="#1b1f23"/><rect x="1351.3" y="67.6" width="1.6" height="1.6" fill="#1b1f23"/><rect x="1357.1" y="64.5" width="1.2" height="1.2" fill="#1b1f23"/><rect x="1379.7" y="36.1" width="1.2" height="1.2" fill="#1b1f23"/><rect x="1351.6" y="70.6" width="1.2" height="1.2" fill="#1b1f23"/><rect x="1375.1" y="32.8" width="1.2" height="1.2" fill="#1b1f23"/><rect x="1399.4" y="13.9" width="1.6" height="1.6" fill="#3f7fae"/><rect x="1351.4" y="62.7" width="1.6" height="1.6" fill="#1b1f23"/><rect x="1411.6" y="8.6" width="1.2" height="1.2" fill="#1b1f23"/><rect x="1381.8" y="35.7" width="1.2" height="1.2" fill="#1b1f23"/><rect x="1364.3" y="47.9" width="1.2" height="1.2" fill="#1b1f23"/><rect x="1361.5" y="52.8" width="1.6" height="1.6" fill="#1b1f23"/><rect x="1379.4" y="31.4" width="1.2" height="1.2" fill="#1b1f23"/><rect x="1393.3" y="21.0" width="1.2" height="1.2" fill="#4a5560"/><rect x="1368.5" y="44.4" width="1.2" height="1.2" fill="#1b1f23"/><rect x="1406.8" y="9.5" width="1.2" height="1.2" fill="#1b1f23"/><rect x="1391.9" y="18.6" width="1.2" height="1.2" fill="#3f7fae"/><rect x="1370.7" y="37.8" width="1.2" height="1.2" fill="#1b1f23"/><rect x="1357.4" y="52.1" width="1.6" height="1.6" fill="#4a5560"/><rect x="1388.7" y="31.9" width="1.2" height="1.2" fill="#1b1f23"/><rect x="1381.4" y="39.7" width="1.2" height="1.2" fill="#1b1f23"/><rect x="1411.9" y="5.5" width="1.2" height="1.2" fill="#3f7fae"/><rect x="1407.9" y="12.8" width="1.2" height="1.2" fill="#1b1f23"/><rect x="1344.0" y="76.8" width="1.6" height="1.6" fill="#4a5560"/><rect x="1367.2" y="38.9" width="1.6" height="1.6" fill="#1b1f23"/><rect x="1361.1" y="49.9" width="1.2" height="1.2" fill="#4a5560"/><rect x="1380.7" y="26.0" width="1.2" height="1.2" fill="#3f7fae"/><rect x="1364.7" y="56.8" width="1.2" height="1.2" fill="#1b1f23"/><rect x="1410.7" y="7.2" width="1.2" height="1.2" fill="#3f7fae"/><rect x="1349.6" y="61.1" width="1.2" height="1.2" fill="#1b1f23"/><rect x="1405.8" y="11.9" width="1.2" height="1.2" fill="#4a5560"/><rect x="1357.9" y="57.3" width="1.2" height="1.2" fill="#1b1f23"/><rect x="1371.4" y="33.0" width="1.6" height="1.6" fill="#3f7fae"/><rect x="1345.3" y="70.6" width="1.2" height="1.2" fill="#3f7fae"/><rect x="1356.2" y="64.7" width="1.2" height="1.2" fill="#1b1f23"/><rect x="1369.6" y="51.7" width="1.2" height="1.2" fill="#1b1f23"/><rect x="1364.4" y="50.8" width="1.6" height="1.6" fill="#1b1f23"/><rect x="1387.5" y="25.4" width="1.2" height="1.2" fill="#4a5560"/><rect x="1378.3" y="28.9" width="1.2" height="1.2" fill="#4a5560"/><rect x="1368.9" y="37.2" width="1.2" height="1.2" fill="#3f7fae"/><rect x="1390.5" y="23.8" width="1.2" height="1.2" fill="#1b1f23"/><rect x="1371.0" y="38.1" width="1.2" height="1.2" fill="#4a5560"/><rect x="1408.4" y="10.6" width="1.2" height="1.2" fill="#1b1f23"/><rect x="1355.6" y="50.8" width="1.2" height="1.2" fill="#3f7fae"/><rect x="1376.5" y="28.8" width="1.2" height="1.2" fill="#3f7fae"/><rect x="1390.7" y="28.7" width="1.2" height="1.2" fill="#1b1f23"/><rect x="1358.1" y="63.7" width="1.6" height="1.6" fill="#4a5560"/><rect x="1349.1" y="65.7" width="1.6" height="1.6" fill="#1b1f23"/><rect x="1348.0" y="66.3" width="1.2" height="1.2" fill="#3f7fae"/><rect x="1418.0" y="3.3" width="1.2" height="1.2" fill="#3f7fae"/><rect x="1354.9" y="58.1" width="1.6" height="1.6" fill="#1b1f23"/><rect x="1377.7" y="27.6" width="1.2" height="1.2" fill="#3f7fae"/><rect x="1391.1" y="29.8" width="1.2" height="1.2" fill="#1b1f23"/><rect x="1401.4" y="13.2" width="1.2" height="1.2" fill="#3f7fae"/><rect x="1372.8" y="32.0" width="1.2" height="1.2" fill="#3f7fae"/><rect x="1375.1" y="49.3" width="1.2" height="1.2" fill="#1b1f23"/><rect x="1346.1" y="72.8" width="1.2" height="1.2" fill="#1b1f23"/><rect x="1355.5" y="56.4" width="1.2" height="1.2" fill="#1b1f23"/><rect x="1353.6" y="68.2" width="1.6" height="1.6" fill="#1b1f23"/><rect x="1341.9" y="76.6" width="1.2" height="1.2" fill="#1b1f23"/><rect x="1370.2" y="33.8" width="1.2" height="1.2" fill="#3f7fae"/><rect x="1376.3" y="28.4" width="1.2" height="1.2" fill="#3f7fae"/><rect x="1387.6" y="22.1" width="1.2" height="1.2" fill="#3f7fae"/><rect x="1359.4" y="56.9" width="1.2" height="1.2" fill="#4a5560"/><rect x="1356.0" y="52.9" width="1.2" height="1.2" fill="#1b1f23"/><rect x="1381.1" y="37.7" width="1.6" height="1.6" fill="#1b1f23"/><rect x="1355.4" y="62.2" width="1.2" height="1.2" fill="#4a5560"/><rect x="1379.8" y="25.9" width="1.2" height="1.2" fill="#3f7fae"/><rect x="1359.8" y="51.3" width="1.2" height="1.2" fill="#1b1f23"/><rect x="1351.5" y="64.9" width="1.2" height="1.2" fill="#1b1f23"/><rect x="1350.4" y="66.3" width="1.2" height="1.2" fill="#1b1f23"/><rect x="1362.4" y="45.6" width="1.2" height="1.2" fill="#1b1f23"/><rect x="1378.1" y="31.9" width="1.2" height="1.2" fill="#1b1f23"/><rect x="1406.5" y="11.6" width="1.2" height="1.2" fill="#1b1f23"/><rect x="1385.9" y="36.7" width="1.2" height="1.2" fill="#4a5560"/><rect x="1383.0" y="30.9" width="1.6" height="1.6" fill="#1b1f23"/><rect x="1405.4" y="10.6" width="1.2" height="1.2" fill="#3f7fae"/><rect x="1358.1" y="51.8" width="1.2" height="1.2" fill="#1b1f23"/><rect x="1384.1" y="23.6" width="1.2" height="1.2" fill="#3f7fae"/><rect x="1373.3" y="41.1" width="1.6" height="1.6" fill="#1b1f23"/><rect x="1414.3" y="5.6" width="1.2" height="1.2" fill="#3f7fae"/><rect x="1389.9" y="27.3" width="1.2" height="1.2" fill="#1b1f23"/><rect x="1371.8" y="39.9" width="1.2" height="1.2" fill="#1b1f23"/><rect x="1352.2" y="57.2" width="1.2" height="1.2" fill="#3f7fae"/><rect x="1342.9" y="73.2" width="1.2" height="1.2" fill="#3f7fae"/><rect x="1394.2" y="19.6" width="1.2" height="1.2" fill="#4a5560"/><rect x="1355.9" y="57.4" width="1.2" height="1.2" fill="#1b1f23"/><rect x="1388.3" y="22.1" width="1.2" height="1.2" fill="#4a5560"/><rect x="1368.9" y="47.3" width="1.2" height="1.2" fill="#4a5560"/><rect x="1365.0" y="49.2" width="1.2" height="1.2" fill="#1b1f23"/><rect x="1412.4" y="10.2" width="1.2" height="1.2" fill="#1b1f23"/><rect x="1371.1" y="50.8" width="1.2" height="1.2" fill="#1b1f23"/><rect x="1343.2" y="75.6" width="1.2" height="1.2" fill="#3f7fae"/><rect x="1342.8" y="76.6" width="1.6" height="1.6" fill="#3f7fae"/><rect x="1400.2" y="13.4" width="1.2" height="1.2" fill="#4a5560"/><rect x="1388.4" y="24.9" width="1.2" height="1.2" fill="#1b1f23"/><rect x="1410.4" y="6.7" width="1.2" height="1.2" fill="#3f7fae"/><rect x="1374.6" y="30.8" width="1.2" height="1.2" fill="#3f7fae"/><rect x="1359.8" y="46.5" width="1.2" height="1.2" fill="#1b1f23"/><rect x="1351.7" y="62.9" width="1.2" height="1.2" fill="#4a5560"/><rect x="1369.7" y="48.0" width="1.2" height="1.2" fill="#1b1f23"/><rect x="1380.5" y="28.2" width="1.6" height="1.6" fill="#1b1f23"/><rect x="1388.1" y="19.7" width="1.2" height="1.2" fill="#3f7fae"/><rect x="1365.0" y="51.8" width="1.2" height="1.2" fill="#1b1f23"/><rect x="1413.2" y="5.6" width="1.2" height="1.2" fill="#1b1f23"/><rect x="1400.0" y="21.1" width="1.6" height="1.6" fill="#1b1f23"/><rect x="1367.2" y="48.7" width="1.2" height="1.2" fill="#1b1f23"/><rect x="1352.7" y="59.2" width="1.2" height="1.2" fill="#4a5560"/><rect x="1381.5" y="27.9" width="1.2" height="1.2" fill="#1b1f23"/><rect x="1363.1" y="53.7" width="1.2" height="1.2" fill="#1b1f23"/><rect x="1348.2" y="62.3" width="1.2" height="1.2" fill="#3f7fae"/><rect x="1371.0" y="37.7" width="1.2" height="1.2" fill="#4a5560"/><rect x="1405.1" y="10.3" width="1.6" height="1.6" fill="#1b1f23"/><rect x="1352.9" y="59.4" width="1.2" height="1.2" fill="#1b1f23"/><rect x="1411.7" y="6.3" width="1.2" height="1.2" fill="#1b1f23"/><rect x="1364.7" y="49.4" width="1.6" height="1.6" fill="#4a5560"/><rect x="1382.2" y="29.1" width="1.2" height="1.2" fill="#4a5560"/><rect x="1370.4" y="43.9" width="1.2" height="1.2" fill="#1b1f23"/><rect x="1377.2" y="33.8" width="1.2" height="1.2" fill="#1b1f23"/><rect x="1383.8" y="37.7" width="1.2" height="1.2" fill="#4a5560"/><rect x="1362.6" y="54.8" width="1.2" height="1.2" fill="#4a5560"/><rect x="1416.7" y="4.3" width="1.6" height="1.6" fill="#3f7fae"/><rect x="1401.9" y="18.7" width="1.6" height="1.6" fill="#1b1f23"/><rect x="1388.1" y="21.4" width="1.6" height="1.6" fill="#3f7fae"/><rect x="1350.6" y="60.7" width="1.2" height="1.2" fill="#3f7fae"/><rect x="1369.4" y="37.7" width="1.6" height="1.6" fill="#1b1f23"/><rect x="1395.5" y="14.8" width="1.2" height="1.2" fill="#3f7fae"/><rect x="1404.8" y="15.2" width="1.6" height="1.6" fill="#1b1f23"/><rect x="1385.0" y="36.3" width="1.2" height="1.2" fill="#1b1f23"/><rect x="1405.5" y="13.9" width="1.2" height="1.2" fill="#1b1f23"/><rect x="1359.3" y="49.2" width="1.2" height="1.2" fill="#1b1f23"/><rect x="1349.1" y="62.1" width="1.2" height="1.2" fill="#3f7fae"/><rect x="1411.8" y="7.6" width="1.2" height="1.2" fill="#1b1f23"/><rect x="1360.3" y="47.4" width="1.2" height="1.2" fill="#1b1f23"/><rect x="1398.9" y="15.3" width="1.2" height="1.2" fill="#4a5560"/><rect x="1387.0" y="21.6" width="1.6" height="1.6" fill="#1b1f23"/><rect x="1386.3" y="25.5" width="1.2" height="1.2" fill="#1b1f23"/><rect x="1364.9" y="39.3" width="1.6" height="1.6" fill="#3f7fae"/><rect x="1360.3" y="55.7" width="1.2" height="1.2" fill="#1b1f23"/><rect x="1406.1" y="9.3" width="1.2" height="1.2" fill="#4a5560"/><rect x="1373.1" y="31.8" width="1.2" height="1.2" fill="#3f7fae"/><rect x="1391.3" y="25.1" width="1.2" height="1.2" fill="#4a5560"/><rect x="1382.0" y="28.8" width="1.2" height="1.2" fill="#1b1f23"/><rect x="1386.1" y="38.2" width="1.6" height="1.6" fill="#1b1f23"/><rect x="1386.3" y="29.9" width="1.2" height="1.2" fill="#1b1f23"/><rect x="1383.1" y="24.7" width="1.2" height="1.2" fill="#3f7fae"/><rect x="1367.0" y="48.7" width="1.2" height="1.2" fill="#1b1f23"/><rect x="1391.0" y="19.7" width="1.2" height="1.2" fill="#1b1f23"/><rect x="1343.3" y="78.4" width="1.2" height="1.2" fill="#3f7fae"/><rect x="1374.6" y="36.9" width="1.2" height="1.2" fill="#1b1f23"/><rect x="1348.1" y="67.9" width="1.2" height="1.2" fill="#1b1f23"/><rect x="1393.9" y="16.5" width="1.2" height="1.2" fill="#3f7fae"/><rect x="1376.5" y="33.7" width="1.2" height="1.2" fill="#4a5560"/><rect x="1414.8" y="5.6" width="1.2" height="1.2" fill="#4a5560"/><rect x="1341.8" y="78.3" width="1.2" height="1.2" fill="#1b1f23"/><rect x="1341.8" y="76.8" width="1.6" height="1.6" fill="#3f7fae"/><rect x="1343.0" y="74.6" width="1.6" height="1.6" fill="#3f7fae"/><rect x="1360.2" y="52.0" width="1.2" height="1.2" fill="#4a5560"/><rect x="1377.1" y="43.7" width="1.2" height="1.2" fill="#1b1f23"/><rect x="1362.0" y="47.9" width="1.2" height="1.2" fill="#1b1f23"/><rect x="1344.9" y="75.3" width="1.2" height="1.2" fill="#1b1f23"/><rect x="1350.8" y="58.2" width="1.2" height="1.2" fill="#3f7fae"/><rect x="1392.0" y="20.7" width="1.2" height="1.2" fill="#4a5560"/><rect x="1384.4" y="38.4" width="1.2" height="1.2" fill="#1b1f23"/><rect x="1381.1" y="31.9" width="1.2" height="1.2" fill="#1b1f23"/><rect x="1342.7" y="73.6" width="1.6" height="1.6" fill="#1b1f23"/><rect x="1363.2" y="43.8" width="1.2" height="1.2" fill="#4a5560"/><rect x="1363.7" y="55.6" width="1.2" height="1.2" fill="#1b1f23"/><rect x="1344.4" y="75.5" width="1.2" height="1.2" fill="#3f7fae"/><rect x="1411.7" y="8.7" width="1.2" height="1.2" fill="#1b1f23"/><rect x="1391.7" y="31.8" width="1.2" height="1.2" fill="#4a5560"/><rect x="1392.0" y="19.6" width="1.2" height="1.2" fill="#1b1f23"/><rect x="1388.8" y="19.4" width="1.2" height="1.2" fill="#3f7fae"/><rect x="1345.4" y="68.8" width="1.6" height="1.6" fill="#3f7fae"/><rect x="1352.2" y="60.9" width="1.6" height="1.6" fill="#1b1f23"/><rect x="1366.6" y="37.5" width="1.6" height="1.6" fill="#3f7fae"/><rect x="1373.6" y="41.8" width="1.2" height="1.2" fill="#1b1f23"/><rect x="1350.7" y="64.8" width="1.2" height="1.2" fill="#1b1f23"/><rect x="1379.1" y="32.5" width="1.2" height="1.2" fill="#4a5560"/><rect x="1378.8" y="32.3" width="1.2" height="1.2" fill="#1b1f23"/><rect x="1358.6" y="58.3" width="1.6" height="1.6" fill="#1b1f23"/><rect x="1365.9" y="50.2" width="1.6" height="1.6" fill="#1b1f23"/><rect x="1408.2" y="9.2" width="1.2" height="1.2" fill="#1b1f23"/><rect x="1400.9" y="11.9" width="1.2" height="1.2" fill="#3f7fae"/><rect x="1354.1" y="68.4" width="1.2" height="1.2" fill="#1b1f23"/><rect x="1351.2" y="59.2" width="1.2" height="1.2" fill="#3f7fae"/><rect x="1383.4" y="38.4" width="1.6" height="1.6" fill="#1b1f23"/><rect x="1389.0" y="21.5" width="1.2" height="1.2" fill="#3f7fae"/><rect x="1342.1" y="77.0" width="1.2" height="1.2" fill="#3f7fae"/><rect x="1368.6" y="37.6" width="1.6" height="1.6" fill="#3f7fae"/><rect x="1353.8" y="67.1" width="1.2" height="1.2" fill="#1b1f23"/><rect x="1376.9" y="38.5" width="1.2" height="1.2" fill="#1b1f23"/><rect x="1411.3" y="7.0" width="1.2" height="1.2" fill="#3f7fae"/><rect x="1394.6" y="27.9" width="1.2" height="1.2" fill="#1b1f23"/><rect x="1412.7" y="6.1" width="1.6" height="1.6" fill="#3f7fae"/><rect x="1346.7" y="70.9" width="1.6" height="1.6" fill="#1b1f23"/><rect x="1344.9" y="73.4" width="1.6" height="1.6" fill="#1b1f23"/><rect x="1390.5" y="30.0" width="1.2" height="1.2" fill="#1b1f23"/><rect x="1351.4" y="63.3" width="1.2" height="1.2" fill="#1b1f23"/><rect x="1365.4" y="44.8" width="1.6" height="1.6" fill="#1b1f23"/><rect x="1373.8" y="31.1" width="1.6" height="1.6" fill="#4a5560"/><rect x="1414.0" y="9.3" width="1.2" height="1.2" fill="#1b1f23"/><rect x="1381.0" y="34.6" width="1.2" height="1.2" fill="#4a5560"/><rect x="1378.7" y="43.0" width="1.6" height="1.6" fill="#4a5560"/><rect x="1342.2" y="76.9" width="1.2" height="1.2" fill="#3f7fae"/><rect x="1395.0" y="23.3" width="1.6" height="1.6" fill="#4a5560"/><rect x="1400.0" y="14.2" width="1.2" height="1.2" fill="#1b1f23"/><rect x="1356.9" y="57.2" width="1.2" height="1.2" fill="#1b1f23"/><rect x="1358.3" y="61.4" width="1.2" height="1.2" fill="#1b1f23"/><rect x="1394.7" y="17.4" width="1.2" height="1.2" fill="#3f7fae"/><rect x="1359.6" y="60.0" width="1.2" height="1.2" fill="#1b1f23"/><rect x="1392.2" y="24.5" width="1.2" height="1.2" fill="#1b1f23"/><rect x="1352.6" y="57.5" width="1.2" height="1.2" fill="#3f7fae"/><rect x="1410.1" y="12.5" width="1.2" height="1.2" fill="#4a5560"/><rect x="1364.2" y="53.4" width="1.2" height="1.2" fill="#1b1f23"/><rect x="1373.6" y="44.4" width="1.2" height="1.2" fill="#1b1f23"/><rect x="1407.8" y="8.5" width="1.2" height="1.2" fill="#4a5560"/><rect x="1410.2" y="7.6" width="1.2" height="1.2" fill="#3f7fae"/><rect x="1390.2" y="31.4" width="1.2" height="1.2" fill="#1b1f23"/><rect x="1347.0" y="67.4" width="1.2" height="1.2" fill="#3f7fae"/><rect x="1342.9" y="74.0" width="1.2" height="1.2" fill="#3f7fae"/><rect x="1380.1" y="37.7" width="1.2" height="1.2" fill="#1b1f23"/><rect x="1344.9" y="72.4" width="1.2" height="1.2" fill="#3f7fae"/><rect x="1360.8" y="52.4" width="1.2" height="1.2" fill="#4a5560"/><rect x="1383.7" y="35.5" width="1.6" height="1.6" fill="#4a5560"/><rect x="1343.1" y="76.6" width="1.2" height="1.2" fill="#3f7fae"/><rect x="1389.3" y="19.2" width="1.2" height="1.2" fill="#1b1f23"/><rect x="1366.2" y="38.6" width="1.2" height="1.2" fill="#3f7fae"/><rect x="1380.2" y="29.0" width="1.2" height="1.2" fill="#1b1f23"/><rect x="1405.9" y="12.1" width="1.2" height="1.2" fill="#1b1f23"/><rect x="1408.7" y="8.7" width="1.2" height="1.2" fill="#1b1f23"/><rect x="1415.9" y="4.3" width="1.2" height="1.2" fill="#3f7fae"/><rect x="1353.9" y="67.1" width="1.2" height="1.2" fill="#1b1f23"/><rect x="1377.0" y="34.5" width="1.2" height="1.2" fill="#1b1f23"/><rect x="1369.8" y="37.1" width="1.2" height="1.2" fill="#3f7fae"/><rect x="1371.8" y="39.3" width="1.2" height="1.2" fill="#1b1f23"/><rect x="1347.4" y="72.8" width="1.2" height="1.2" fill="#4a5560"/><rect x="1407.6" y="10.3" width="1.2" height="1.2" fill="#4a5560"/><rect x="1369.2" y="38.2" width="1.2" height="1.2" fill="#3f7fae"/><rect x="1357.2" y="63.4" width="1.2" height="1.2" fill="#4a5560"/><rect x="1398.8" y="20.0" width="1.6" height="1.6" fill="#1b1f23"/><rect x="1356.8" y="51.5" width="1.2" height="1.2" fill="#3f7fae"/><rect x="1397.7" y="19.5" width="1.2" height="1.2" fill="#1b1f23"/><rect x="1383.6" y="24.1" width="1.2" height="1.2" fill="#3f7fae"/><rect x="1390.5" y="28.1" width="1.2" height="1.2" fill="#1b1f23"/><rect x="1346.6" y="75.0" width="1.2" height="1.2" fill="#4a5560"/><rect x="1412.2" y="7.8" width="1.2" height="1.2" fill="#1b1f23"/><rect x="1352.4" y="66.7" width="1.2" height="1.2" fill="#4a5560"/><rect x="1371.2" y="35.5" width="1.2" height="1.2" fill="#1b1f23"/><rect x="1412.0" y="7.3" width="1.6" height="1.6" fill="#3f7fae"/><rect x="1386.8" y="36.3" width="1.2" height="1.2" fill="#1b1f23"/><rect x="1368.3" y="36.5" width="1.2" height="1.2" fill="#3f7fae"/><rect x="1353.0" y="56.0" width="1.2" height="1.2" fill="#3f7fae"/><rect x="1343.6" y="74.8" width="1.2" height="1.2" fill="#3f7fae"/><rect x="1362.9" y="44.2" width="1.2" height="1.2" fill="#3f7fae"/><rect x="1389.3" y="28.8" width="1.6" height="1.6" fill="#4a5560"/><rect x="1356.3" y="58.0" width="1.2" height="1.2" fill="#1b1f23"/><rect x="1343.3" y="73.3" width="1.2" height="1.2" fill="#1b1f23"/><rect x="1395.5" y="21.2" width="1.2" height="1.2" fill="#1b1f23"/><rect x="1376.6" y="45.9" width="1.2" height="1.2" fill="#1b1f23"/><rect x="1386.8" y="24.1" width="1.2" height="1.2" fill="#1b1f23"/><rect x="1367.1" y="47.6" width="1.2" height="1.2" fill="#1b1f23"/><rect x="1346.1" y="66.2" width="1.2" height="1.2" fill="#3f7fae"/><rect x="1367.2" y="38.6" width="1.2" height="1.2" fill="#3f7fae"/><rect x="1365.3" y="57.1" width="1.6" height="1.6" fill="#1b1f23"/><rect x="1371.7" y="37.7" width="1.2" height="1.2" fill="#1b1f23"/><rect x="1388.4" y="23.3" width="1.2" height="1.2" fill="#1b1f23"/><rect x="1380.7" y="29.2" width="1.2" height="1.2" fill="#1b1f23"/><rect x="1405.0" y="12.0" width="1.2" height="1.2" fill="#4a5560"/><rect x="1387.6" y="29.6" width="1.2" height="1.2" fill="#4a5560"/><rect x="1385.2" y="25.6" width="1.2" height="1.2" fill="#4a5560"/><rect x="1416.0" y="3.8" width="1.2" height="1.2" fill="#3f7fae"/><rect x="1356.7" y="57.7" width="1.2" height="1.2" fill="#4a5560"/><rect x="1408.0" y="8.3" width="1.2" height="1.2" fill="#1b1f23"/><rect x="1391.7" y="26.7" width="1.2" height="1.2" fill="#1b1f23"/><rect x="1377.7" y="34.4" width="1.2" height="1.2" fill="#4a5560"/><rect x="1394.1" y="28.3" width="1.2" height="1.2" fill="#1b1f23"/><rect x="1351.9" y="65.4" width="1.6" height="1.6" fill="#1b1f23"/><rect x="1363.5" y="42.1" width="1.6" height="1.6" fill="#3f7fae"/><rect x="1382.6" y="40.2" width="1.2" height="1.2" fill="#1b1f23"/><rect x="1389.5" y="27.1" width="1.2" height="1.2" fill="#1b1f23"/><rect x="1371.6" y="32.9" width="1.2" height="1.2" fill="#3f7fae"/><rect x="1406.2" y="15.5" width="1.2" height="1.2" fill="#1b1f23"/><rect x="1398.0" y="20.2" width="1.2" height="1.2" fill="#1b1f23"/><rect x="1401.0" y="19.9" width="1.2" height="1.2" fill="#1b1f23"/><rect x="1404.3" y="10.2" width="1.6" height="1.6" fill="#3f7fae"/><rect x="1379.0" y="34.6" width="1.2" height="1.2" fill="#1b1f23"/><rect x="1353.7" y="68.2" width="1.6" height="1.6" fill="#1b1f23"/><rect x="1409.1" y="10.2" width="1.2" height="1.2" fill="#1b1f23"/><rect x="1406.8" y="14.3" width="1.2" height="1.2" fill="#1b1f23"/><rect x="1344.1" y="75.6" width="1.2" height="1.2" fill="#1b1f23"/><rect x="1344.5" y="70.5" width="1.6" height="1.6" fill="#3f7fae"/><rect x="1342.8" y="73.2" width="1.2" height="1.2" fill="#3f7fae"/><rect x="1386.8" y="29.0" width="1.2" height="1.2" fill="#1b1f23"/><rect x="1360.2" y="48.2" width="1.2" height="1.2" fill="#1b1f23"/><rect x="1359.7" y="53.3" width="1.2" height="1.2" fill="#4a5560"/><rect x="1371.6" y="36.5" width="1.2" height="1.2" fill="#1b1f23"/><rect x="1387.4" y="24.8" width="1.2" height="1.2" fill="#1b1f23"/><rect x="1374.9" y="37.5" width="1.2" height="1.2" fill="#1b1f23"/><rect x="1355.5" y="51.7" width="1.2" height="1.2" fill="#3f7fae"/><rect x="1405.9" y="15.6" width="1.2" height="1.2" fill="#1b1f23"/><rect x="1365.7" y="47.5" width="1.6" height="1.6" fill="#4a5560"/><rect x="1344.8" y="72.1" width="1.2" height="1.2" fill="#3f7fae"/><rect x="1404.1" y="12.7" width="1.2" height="1.2" fill="#4a5560"/><rect x="1348.7" y="65.3" width="1.6" height="1.6" fill="#3f7fae"/><rect x="1370.7" y="46.6" width="1.2" height="1.2" fill="#1b1f23"/><rect x="1407.6" y="11.4" width="1.2" height="1.2" fill="#1b1f23"/><rect x="1378.7" y="34.4" width="1.2" height="1.2" fill="#1b1f23"/><rect x="1346.5" y="73.8" width="1.2" height="1.2" fill="#1b1f23"/><rect x="1381.4" y="27.0" width="1.2" height="1.2" fill="#1b1f23"/><rect x="1395.4" y="14.6" width="1.2" height="1.2" fill="#3f7fae"/><rect x="1413.0" y="6.2" width="1.2" height="1.2" fill="#3f7fae"/><rect x="1385.2" y="36.4" width="1.6" height="1.6" fill="#1b1f23"/><rect x="1357.4" y="59.2" width="1.2" height="1.2" fill="#4a5560"/><rect x="1362.4" y="58.5" width="1.2" height="1.2" fill="#1b1f23"/><rect x="1362.2" y="58.2" width="1.2" height="1.2" fill="#1b1f23"/><rect x="1366.4" y="49.1" width="1.2" height="1.2" fill="#1b1f23"/><rect x="1370.7" y="33.8" width="1.2" height="1.2" fill="#3f7fae"/><rect x="1350.6" y="66.1" width="1.2" height="1.2" fill="#1b1f23"/><rect x="1394.2" y="20.1" width="1.2" height="1.2" fill="#1b1f23"/><rect x="1402.2" y="10.7" width="1.2" height="1.2" fill="#1b1f23"/><rect x="1394.7" y="22.9" width="1.2" height="1.2" fill="#1b1f23"/><rect x="1342.8" y="75.2" width="1.2" height="1.2" fill="#3f7fae"/><rect x="1402.9" y="14.4" width="1.2" height="1.2" fill="#1b1f23"/><rect x="1349.0" y="61.4" width="1.2" height="1.2" fill="#3f7fae"/><rect x="1373.1" y="35.0" width="1.2" height="1.2" fill="#1b1f23"/><rect x="1367.0" y="37.2" width="1.2" height="1.2" fill="#3f7fae"/><rect x="1406.3" y="11.9" width="1.2" height="1.2" fill="#4a5560"/><rect x="1366.1" y="49.8" width="1.2" height="1.2" fill="#4a5560"/><rect x="1355.8" y="54.2" width="1.6" height="1.6" fill="#3f7fae"/><path d="M1050 898 C1012 912 990 940 988 975 C987 1000 995 1022 1020 1038 L1100 1000 Z" fill="#3b3b3b"/><path d="M1040 908 C1010 925 996 950 995 978 C995 1000 1002 1018 1018 1030" fill="none" stroke="#202020" stroke-width="1.2"/><path d="M1074.5 857.5 L1213.8 928.6 L1204.5 948 L1066.8 871.4 Z" fill="#4d4d4d"/><path d="M1066.8 871.4 L1204.5 948 L1186 977 L1150 1000 L1040 1000 L1014 976 L1029.6 938 Z" fill="url(#w1h)"/><path d="M1001 838 L1011 840.5 L1057.5 882.2 L1050 898 C1012 912 990 940 988 975 L991.5 1004.4 L932 958 Z" fill="url(#conseg)"/><path d="M1012 838 C1000 870 980 905 955 936 L946 945 L932 958 L916.7 945 C945 915 975 880 1001 840 Z" fill="#575757"/><path d="M729.7 922.6 L785 857.3 L848.3 770.9 C900 776 958 792 1001.8 826.4 L1009.5 841.9 L1012 838 C1000 870 980 905 955 936 L932 958 L896 955.4 L851.6 1014.8 C820 990 790 965 773.7 954.5 C755 945 738 938 729.7 922.6 Z" fill="url(#w2)"/><path d="M885 800 C905 850 900 905 875 948 L896 955 C918 905 922 850 905 800 Z" fill="#8f8f8f" opacity="0.35" filter="url(#blur3)"/><path d="M785 857.3 C830 885 870 915 901 940 L890.9 955.4 C860 930 815 895 774.8 867.7 Z" fill="#565656"/><path d="M774.8 867.7 C815 895 860 930 890.9 955.4" fill="none" stroke="#1a1a1a" stroke-width="1"/><path d="M848.3 770.9 C850 760 868 744 890 737 C915 732 940 738 958 751.6 C985 772 1003 792 1007 808 C1008 815 1005 822 1001.8 826.4 C958 792 900 776 848.3 770.9 Z" fill="#66abdd"/><path d="M848.3 770.9 C900 776 958 792 1001.8 826.4 L1003 819 C958 786 900 770 849 765 Z" fill="#3f8dc6"/><path d="M731 929 C742 940 758 946 775 957 C795 970 820 990 849 1012" fill="none" stroke="#575757" stroke-width="4"/><path d="M742 940 C760 950 780 960 800 974 C812 983 822 993 832 1004" fill="none" stroke="#a9a9a9" stroke-width="5"/><path d="M735 943 L744 944 C765 953 785 965 803 978 C815 987 825 998 833 1008 L831 1020 L794 1070 L748.5 1030 L725 1005 L720 996 L721 959 Z" fill="#0b0b0b"/><path d="M786.3 988 L793.8 980.5 L823.1 1008.1 L807.2 1020.7 L784.6 1000.6 L792 994 Z" fill="url(#notch)"/><circle cx="758" cy="965" r="1.5" fill="#5555cc"/><path d="M751 963 L755 960" stroke="#5555cc" stroke-width="1.2"/><rect x="595" y="732" width="33" height="6" fill="#1e1e1e"/><rect x="595" y="738" width="33" height="32" fill="url(#cyl1)"/><rect x="592" y="770" width="40" height="10" fill="#a7aeb6"/><rect x="597" y="780" width="31" height="34" fill="#19a2bc"/><rect x="612" y="790" width="16" height="12" fill="#158da5"/><rect x="596" y="814" width="34" height="20" fill="#262626"/><ellipse cx="613" cy="841" rx="43" ry="8" fill="#1c1c1c"/><path d="M560 852 L666 852 L666 871 L560 871 Z" fill="#6e6e6e"/><ellipse cx="613" cy="852" rx="53" ry="8" fill="#2e2e2e"/><rect x="538" y="848" width="22" height="23" fill="#d4d4d4"/><path d="M535 871 L578 877 L694 872 L694 903 L578 912 L535 905 Z" fill="#002260"/><path d="M535 871 L578 877 L578 912 L535 905 Z" fill="#062a6a"/><path d="M535 905 L578 912 L694 903 L696 979 L578 987 L537 977 Z" fill="#a2a2a2"/><path d="M578 912 L600 910 L600 986 L578 987 Z" fill="#cbcbcb"/><path d="M535 905 L578 912 L694 903 L694 908 L578 917 L535 910 Z" fill="#d6d6d6"/><rect x="689" y="905" width="8" height="74" fill="#555"/><path d="M694 903 L702 903.7 L719.3 920 L720 995.6 L700 1008 L694 985 Z" fill="#bdbdbd"/><path d="M668 1013 L700 1000 L797 1099 L737 1083 Z" fill="#7a7a7a"/><path d="M700 1000 L720 996 L806 1085 L797 1099 Z" fill="#b8b8b8"/><ellipse cx="691.0" cy="1028.0" rx="6" ry="3.5" fill="#d8d8d8" transform="rotate(30 691.0 1028.0)"/><ellipse cx="720.8" cy="1035.0" rx="6" ry="3.5" fill="#d8d8d8" transform="rotate(30 720.8 1035.0)"/><ellipse cx="730.4" cy="1065.0" rx="6" ry="3.5" fill="#d8d8d8" transform="rotate(30 730.4 1065.0)"/><ellipse cx="760.0" cy="1073.5" rx="5" ry="3.0" fill="#d8d8d8" transform="rotate(30 760.0 1073.5)"/><ellipse cx="753.4" cy="1078.0" rx="3" ry="2.0" fill="#d8d8d8" transform="rotate(30 753.4 1078.0)"/><rect x="554" y="981" width="125" height="23" rx="6" fill="#6c6c6c"/><ellipse cx="618" cy="1010" rx="61" ry="8" fill="#1a1a1a"/><rect x="574" y="1017" width="93" height="20" rx="4" fill="#5c5c5c"/><rect x="591" y="1037" width="55" height="122" fill="url(#shaft)"/><rect x="592" y="1152" width="53" height="8" fill="#555"/><rect x="607" y="1160" width="24" height="35" fill="#b0b0b0"/><rect x="608" y="1195" width="22" height="25" fill="#8a8a8a"/><rect x="614" y="1220" width="11" height="35" fill="#9a9a9a"/><ellipse cx="1099.7" cy="999.2" rx="86.3" ry="81.2" fill="#3a7fb3" transform="rotate(-15 1099.7 999.2)"/><ellipse cx="1102" cy="997" rx="82" ry="78" fill="#68aee0" transform="rotate(-15 1102 997)"/><path d="M1099.5 959.3 L1155 990 L1155 995 L1105.8 1044.2 L1062.5 1020.3 L1061 1016.6 L1090.5 966.6 L1095 980.5 L1095.4 990.5 L1084 997 C1075 1002 1073 1012 1077 1017 C1082 1024 1095 1026 1102 1023 C1108 1020 1111 1014 1111 1011 L1120 983 C1125 980 1132 981 1137 985 C1143 990 1143 996 1140 1000 L1114.8 1047 C1113 1050 1119 1051 1121 1049 L1146 1002 C1149 995 1150 988 1146 984 C1140 978 1128 976 1119 978 L1108 1000 C1102 1012 1098 1015 1092 1015 C1086 1015 1084 1010 1086 1006 L1098 998 L1100 985 Z" fill="none" stroke="#3d6f96" stroke-width="0.8" stroke-dasharray="1.5 0.8"/><circle cx="1072.7" cy="943.7" r="5" fill="#d4d4d4" stroke="#3b6f98" stroke-width="1.5"/><circle cx="1177.2" cy="1003.0" r="5" fill="#d4d4d4" stroke="#3b6f98" stroke-width="1.5"/><circle cx="1071.4" cy="1063.7" r="5" fill="#d4d4d4" stroke="#3b6f98" stroke-width="1.5"/><g clip-path="url(#vp)"><path d="M1486.6 1541 C1489 1500 1491 1460 1493 1442.8 C1496 1415 1498 1395 1500.6 1379 C1506 1340 1511 1300 1515.8 1277 C1521 1250 1527 1220 1534.2 1200 C1540 1170 1546 1140 1553 1118.6 C1560 1100 1566 1090 1572 1078 C1580 1050 1587 1030 1593.8 1010.2 C1600 990 1605 970 1610 956 C1618 930 1625 905 1631.7 888.3 C1637 872 1642 858 1648 847.7 C1655 835 1660 826 1664.2 820.6 C1675 808 1685 801 1696.7 799 L1790 786 L2016 776 L2283 766 L2283 1541 Z" fill="#141519"/><path d="M1521 1541 C1528 1500 1533 1460 1538.8 1430 C1544 1405 1549 1385 1554 1366.5 C1562 1335 1570 1305 1579.5 1277.3 C1590 1245 1598 1222 1607.5 1201 C1620 1175 1630 1150 1642.5 1118.6 C1650 1100 1657 1090 1664.2 1078 C1675 1052 1683 1033 1691.3 1013 C1700 990 1710 960 1720 937 C1728 915 1736 895 1745 882 C1752 868 1760 856 1769 850 C1782 842 1795 838 1809.4 837.4 L2283 852.8" fill="none" stroke="#2e3038" stroke-width="100" filter="url(#blur12)" clip-path="url(#frclip)"/><path d="M1700 800 L2283 770 L2283 852 L1809 837 Z" fill="#26282f" filter="url(#blur3)" clip-path="url(#frclip)"/><path d="M1521 1541 C1528 1500 1533 1460 1538.8 1430 C1544 1405 1549 1385 1554 1366.5 C1562 1335 1570 1305 1579.5 1277.3 C1590 1245 1598 1222 1607.5 1201 C1620 1175 1630 1150 1642.5 1118.6 C1650 1100 1657 1090 1664.2 1078 C1675 1052 1683 1033 1691.3 1013 C1700 990 1710 960 1720 937 C1728 915 1736 895 1745 882 C1752 868 1760 856 1769 850 C1782 842 1795 838 1809.4 837.4 L2283 852.8 L2283 1541 Z" fill="#999eb4"/><path d="M1521 1541 C1528 1500 1533 1460 1538.8 1430 C1544 1405 1549 1385 1554 1366.5 C1562 1335 1570 1305 1579.5 1277.3 C1590 1245 1598 1222 1607.5 1201 C1620 1175 1630 1150 1642.5 1118.6 C1650 1100 1657 1090 1664.2 1078 C1675 1052 1683 1033 1691.3 1013 C1700 990 1710 960 1720 937 C1728 915 1736 895 1745 882 C1752 868 1760 856 1769 850 C1782 842 1795 838 1809.4 837.4" fill="none" stroke="#5a5e70" stroke-width="4" filter="url(#blur2)" clip-path="url(#lavclip)"/><path d="M2097.3 1020.9 C2120 1014 2140 1011 2163 1010 C2150 1022 2140 1032 2132 1039.5 C2115 1065 2100 1090 2092.7 1111.4 L2069.5 1130 L2037 1102 L2048.6 1083.6 C2065 1055 2080 1035 2097.3 1020.9 Z" fill="#8c91a6"/><path d="M2163 1010 C2150 1022 2140 1032 2132 1039.5 C2115 1065 2100 1090 2092.7 1111.4" fill="none" stroke="#a9aec1" stroke-width="3"/><path d="M2037 1102 L2069.5 1130 L2020.7 1130 Z" fill="#343743"/><path d="M2048.6 1083.6 L2083 1118 L2078 1132 L2037 1102 Z" fill="#858a9f"/><path d="M2020.7 1130 L2071.8 1130 L2067 1209 L1985.9 1202 Z" fill="#969bb0"/><path d="M1985.9 1204.3 L2067 1213.6 L2009 1360 L1923 1360 L1958 1255 Z" fill="#535769"/><path d="M2097.3 1020.9 C2070 1045 2055 1065 2048.6 1083.6 C2035 1105 2025 1122 2016 1139.3 C2005 1160 1995 1175 1985.9 1190.3 C1975 1210 1965 1228 1958 1243.7 C1945 1270 1935 1295 1927.9 1313.4 C1920 1330 1914 1345 1908 1360 L1900 1400 C1890 1440 1880 1480 1874 1541 L1886 1541 C1895 1480 1905 1430 1916 1360 C1930 1300 1950 1250 1970 1205 C2000 1140 2040 1070 2097.3 1020.9 Z" fill="#70758a"/><path d="M2064 1130 L2078 1130 L2069.5 1541 L2055 1541 Z" fill="#adb2c5"/><path d="M2064 1130 L2068 1130 L2059 1541 L2055 1541 Z" fill="#c3c7d6"/><path d="M2071.8 1227.5 L2141.4 1269.3 L2071.8 1264.6 Z" fill="#343743"/><path d="M2078 1205 L2163 1258 L2160 1272 L2075 1220 Z" fill="#858a9f"/><path d="M2071.8 1264.6 L2138 1269.3 L2146 1449 L2071 1449 Z" fill="#959aaf"/><path d="M2136.8 1269.3 L2148 1269.3 L2150 1432 L2165 1449 L2150 1449 L2140 1432 Z" fill="#adb2c5"/><path d="M2283 1028 L2280.6 1028 C2270 1060 2262 1090 2259.5 1105.4 C2245 1160 2235 1190 2231.4 1210.8 C2220 1250 2216 1265 2213.8 1281 C2208 1320 2206 1340 2206.8 1351.4 C2208 1365 2210 1372 2213.8 1379.5 L2231.4 1390 L2283 1390 Z" fill="#141414"/><path d="M2231 1144 L2281 1140 L2281 1189.7 L2228 1192 Z" fill="#e2bf22"/><path d="M2225 1192 L2281 1190 L2281 1386 L2217 1386 Z" fill="#2a261f"/><path d="M2069.7 1383 L2161 1449.8 L2217.3 1390 L2283 1386.5 L2283 1541 L2069.7 1541 Z" fill="#2a2b33"/><ellipse cx="2090.8" cy="1460.3" rx="20" ry="11" fill="#b9bdcd"/><ellipse cx="2245.4" cy="1463.8" rx="20" ry="11" fill="#b9bdcd"/><ellipse cx="2213.8" cy="1509.5" rx="20" ry="11" fill="#b9bdcd"/><path d="M1799 1203.5 C1790 1240 1786 1275 1786 1300 C1787 1360 1792 1420 1796.5 1469 L1879 1469 C1890 1400 1901 1330 1901 1290 C1901 1260 1898 1230 1894.5 1203.5 Z" fill="url(#handle)"/><path d="M1799 1203.5 C1801 1170 1820 1147 1845 1147 C1872 1147 1892 1170 1894.5 1203.5 Z" fill="url(#yel)"/><path d="M1796.5 1469 L1879 1469 L1875.5 1541 L1797 1541 Z" fill="url(#yel)"/><path d="M1912.6 1353 L1938 1332.5 L1984.8 1332.5 L2010.6 1360.8 L2010.6 1541 L1920 1541 Z" fill="#2b2823"/><path d="M1912.6 1353 L1938 1332.5 L1945 1340 L1935 1541 L1920 1541 Z" fill="#0c0b0a"/><circle cx="1925.5" cy="1366" r="16" fill="#231f1b"/><circle cx="1925.5" cy="1366" r="7" fill="#141210"/><path d="M245 1541 L54 1366 L1552 1101 L2283 1238.5" fill="none" stroke="#f0a21a" stroke-width="2"/><rect x="2231" y="978" width="52" height="50" rx="3" fill="#131313"/><path d="M2250 993 L2261 1003 L2250 1013" fill="none" stroke="#fff" stroke-width="2.2"/><rect x="1093" y="1494" width="94" height="31" rx="2" fill="#161616"/><rect x="1099" y="1498" width="22" height="22" rx="2" fill="none" stroke="#1e6d8c" stroke-width="1.3"/><rect x="1129" y="1498" width="22" height="22" rx="2" fill="none" stroke="#1e6d8c" stroke-width="1.3"/><rect x="1159" y="1498" width="22" height="22" rx="2" fill="none" stroke="#2a9fd0" stroke-width="1.3"/><circle cx="1109" cy="1508" r="4.5" fill="none" stroke="#2bc8f6" stroke-width="1.3"/><path d="M1112 1511 L1116 1515" stroke="#2bc8f6" stroke-width="1.5"/><path d="M1140 1506 L1143 1509 L1140 1512 L1137 1509 Z" fill="#2bc8f6"/><path d="M1140 1500 L1140 1518 M1131 1509 L1149 1509 M1138 1502 L1140 1500 L1142 1502 M1138 1516 L1140 1518 L1142 1516 M1133 1507 L1131 1509 L1133 1511 M1147 1507 L1149 1509 L1147 1511" fill="none" stroke="#2bc8f6" stroke-width="1" stroke-dasharray="2 1"/><path d="M1164 1503 C1167 1501 1170 1502 1171 1505 M1176 1512 C1174 1516 1170 1516 1167 1513 M1164 1503 L1163 1506 M1176 1512 L1177 1509" fill="none" stroke="#2bc8f6" stroke-width="1.1"/><circle cx="1172" cy="1507" r="2" fill="#2bc8f6"/></g></svg>
<div id="lp">
 <div class="t" style="left:8px;top:14px;font-size:15px;font-weight:bold;color:#fff;transform:scaleX(.94);transform-origin:left">Trajectoires</div>
 <div class="btnc" style="left:164px;top:9px;width:22px;height:22px">
   <svg width="22" height="22"><path d="M6 9v7h10V9M11 6v7M8 10.5l3 3 3-3" fill="none" stroke="#134a5c" stroke-width="1.3"/></svg></div>
 <div class="btnc" style="left:191px;top:9px;width:22px;height:22px">
   <svg width="22" height="22"><path d="M11 5v12M5 11h12" stroke="#0d3340" stroke-width="1.6"/></svg></div>
 <div class="help" style="left:218px;top:9px;width:22px;height:22px;font-size:15px;line-height:22px">?</div>
<div class="row" style="top:39px"><div class="ic" style="background:repeating-linear-gradient(135deg,#80e27e 0 3px,#4a9a4a 3px 6px)"><svg width="20" height="20" viewBox="0 0 20 20" style="position:absolute;left:0;top:0"><path d="M5 10.5c1.5-3.5 3.5-3.5 5 0s3.5 3.5 5 0" fill="none" stroke="#1e2e1e" stroke-width="1.3"/><circle cx="5" cy="10.5" r="1.3" fill="#1e2e1e"/><circle cx="15" cy="10.5" r="1.3" fill="#1e2e1e"/></svg></div><div class="nm">Traj 1</div><div class="kb"><i style="top:5px"></i><i style="top:10px"></i><i style="top:15px"></i></div></div>
<div class="row" style="top:73px"><div class="ic"><svg width="20" height="20" viewBox="0 0 20 20" style="position:absolute;left:0;top:0"><path d="M5 10.5c1.5-3.5 3.5-3.5 5 0s3.5 3.5 5 0" fill="none" stroke="#1e2e1e" stroke-width="1.3"/><circle cx="5" cy="10.5" r="1.3" fill="#1e2e1e"/><circle cx="15" cy="10.5" r="1.3" fill="#1e2e1e"/></svg></div><div class="nm">CarterB1</div><div class="kb"><i style="top:5px"></i><i style="top:10px"></i><i style="top:15px"></i></div></div>
<div class="row" style="top:107px;background:#012b3b;box-shadow:0 0 0 1.5px #2bc8f6 inset;left:8px;width:233px;height:31px;top:106px"><div class="ic" style="top:5px;left:8px"><svg width="20" height="20" viewBox="0 0 20 20" style="position:absolute;left:0;top:0"><path d="M5 10.5c1.5-3.5 3.5-3.5 5 0s3.5 3.5 5 0" fill="none" stroke="#1e2e1e" stroke-width="1.3"/><circle cx="5" cy="10.5" r="1.3" fill="#1e2e1e"/><circle cx="15" cy="10.5" r="1.3" fill="#1e2e1e"/></svg></div><div class="nm" style="left:33px;top:9px">CarterB2</div><div style="position:absolute;left:166px;top:5px;width:36px;height:21px;border:1.5px solid #7ee07b;border-radius:11px"><svg width="36" height="21" style="position:absolute;left:-1.5px;top:-1.5px"><path d="M6 10.5h9M11.5 6.5l4 4-4 4" fill="none" stroke="#8ee88a" stroke-width="1.8"/><path d="M22 16h8M24.5 15.5v-1.5l2-1.5-3.5-4 3-3 3 1M27 13l-1.5-2" fill="none" stroke="#7ee07b" stroke-width="1.1"/><circle cx="22.5" cy="9" r="1.2" fill="none" stroke="#7ee07b" stroke-width="0.9"/><circle cx="26" cy="5.5" r="1.2" fill="none" stroke="#7ee07b" stroke-width="0.9"/><circle cx="29.5" cy="6.5" r="1.2" fill="none" stroke="#7ee07b" stroke-width="0.9"/><circle cx="26" cy="12.5" r="1.4" fill="none" stroke="#7ee07b" stroke-width="0.9"/></svg></div><div class="kb" style="left:206px;top:4px"><i style="top:5px"></i><i style="top:10px"></i><i style="top:15px"></i></div></div>
<div class="row" style="top:141px"><div class="ic"><svg width="20" height="20" viewBox="0 0 20 20" style="position:absolute;left:0;top:0"><path d="M5 10.5c1.5-3.5 3.5-3.5 5 0s3.5 3.5 5 0" fill="none" stroke="#1e2e1e" stroke-width="1.3"/><circle cx="5" cy="10.5" r="1.3" fill="#1e2e1e"/><circle cx="15" cy="10.5" r="1.3" fill="#1e2e1e"/></svg></div><div class="nm">CarterB3</div><div class="kb"><i style="top:5px"></i><i style="top:10px"></i><i style="top:15px"></i></div></div>
<div class="row" style="top:175px"><div class="ic"><svg width="20" height="20" viewBox="0 0 20 20" style="position:absolute;left:0;top:0"><path d="M5 10.5c1.5-3.5 3.5-3.5 5 0s3.5 3.5 5 0" fill="none" stroke="#1e2e1e" stroke-width="1.3"/><circle cx="5" cy="10.5" r="1.3" fill="#1e2e1e"/><circle cx="15" cy="10.5" r="1.3" fill="#1e2e1e"/></svg></div><div class="nm">CarterH1</div><div class="kb"><i style="top:5px"></i><i style="top:10px"></i><i style="top:15px"></i></div></div>
<div class="row" style="top:209px"><div class="ic"><svg width="20" height="20" viewBox="0 0 20 20" style="position:absolute;left:0;top:0"><path d="M5 10.5c1.5-3.5 3.5-3.5 5 0s3.5 3.5 5 0" fill="none" stroke="#1e2e1e" stroke-width="1.3"/><circle cx="5" cy="10.5" r="1.3" fill="#1e2e1e"/><circle cx="15" cy="10.5" r="1.3" fill="#1e2e1e"/></svg></div><div class="nm">CartBperc4</div><div class="kb"><i style="top:5px"></i><i style="top:10px"></i><i style="top:15px"></i></div></div>
<div class="row" style="top:243px"><div class="ic"><svg width="20" height="20" viewBox="0 0 20 20" style="position:absolute;left:0;top:0"><path d="M5 10.5c1.5-3.5 3.5-3.5 5 0s3.5 3.5 5 0" fill="none" stroke="#1e2e1e" stroke-width="1.3"/><circle cx="5" cy="10.5" r="1.3" fill="#1e2e1e"/><circle cx="15" cy="10.5" r="1.3" fill="#1e2e1e"/></svg></div><div class="nm">CarterH2</div><div class="kb"><i style="top:5px"></i><i style="top:10px"></i><i style="top:15px"></i></div></div>
<div class="row" style="top:277px"><div class="ic"><svg width="20" height="20" viewBox="0 0 20 20" style="position:absolute;left:0;top:0"><path d="M5 10.5c1.5-3.5 3.5-3.5 5 0s3.5 3.5 5 0" fill="none" stroke="#1e2e1e" stroke-width="1.3"/><circle cx="5" cy="10.5" r="1.3" fill="#1e2e1e"/><circle cx="15" cy="10.5" r="1.3" fill="#1e2e1e"/></svg></div><div class="nm">CarterH3</div><div class="kb"><i style="top:5px"></i><i style="top:10px"></i><i style="top:15px"></i></div></div>
<div class="row" style="top:311px"><div class="ic"><svg width="20" height="20" viewBox="0 0 20 20" style="position:absolute;left:0;top:0"><path d="M5 10.5c1.5-3.5 3.5-3.5 5 0s3.5 3.5 5 0" fill="none" stroke="#1e2e1e" stroke-width="1.3"/><circle cx="5" cy="10.5" r="1.3" fill="#1e2e1e"/><circle cx="15" cy="10.5" r="1.3" fill="#1e2e1e"/></svg></div><div class="nm">CarterHperc4</div><div class="kb"><i style="top:5px"></i><i style="top:10px"></i><i style="top:15px"></i></div></div>
<div class="row" style="top:345px"><div class="ic"><svg width="20" height="20" viewBox="0 0 20 20" style="position:absolute;left:0;top:0"><path d="M5 10.5c1.5-3.5 3.5-3.5 5 0s3.5 3.5 5 0" fill="none" stroke="#1e2e1e" stroke-width="1.3"/><circle cx="5" cy="10.5" r="1.3" fill="#1e2e1e"/><circle cx="15" cy="10.5" r="1.3" fill="#1e2e1e"/></svg></div><div class="nm">Homing post carter B</div><div class="kb"><i style="top:5px"></i><i style="top:10px"></i><i style="top:15px"></i></div></div>
<div class="row" style="top:379px"><div class="ic"><svg width="20" height="20" viewBox="0 0 20 20" style="position:absolute;left:0;top:0"><path d="M5 10.5c1.5-3.5 3.5-3.5 5 0s3.5 3.5 5 0" fill="none" stroke="#1e2e1e" stroke-width="1.3"/><circle cx="5" cy="10.5" r="1.3" fill="#1e2e1e"/><circle cx="15" cy="10.5" r="1.3" fill="#1e2e1e"/></svg></div><div class="nm">Approche Carter B</div><div class="kb"><i style="top:5px"></i><i style="top:10px"></i><i style="top:15px"></i></div></div>
<div class="row" style="top:413px"><div class="ic"><svg width="20" height="20" viewBox="0 0 20 20" style="position:absolute;left:0;top:0"><path d="M5 10.5c1.5-3.5 3.5-3.5 5 0s3.5 3.5 5 0" fill="none" stroke="#1e2e1e" stroke-width="1.3"/><circle cx="5" cy="10.5" r="1.3" fill="#1e2e1e"/><circle cx="15" cy="10.5" r="1.3" fill="#1e2e1e"/></svg></div><div class="nm">Approche carter H</div><div class="kb"><i style="top:5px"></i><i style="top:10px"></i><i style="top:15px"></i></div></div>
<div class="row" style="top:447px"><div class="ic"><svg width="20" height="20" viewBox="0 0 20 20" style="position:absolute;left:0;top:0"><path d="M5 10.5c1.5-3.5 3.5-3.5 5 0s3.5 3.5 5 0" fill="none" stroke="#1e2e1e" stroke-width="1.3"/><circle cx="5" cy="10.5" r="1.3" fill="#1e2e1e"/><circle cx="15" cy="10.5" r="1.3" fill="#1e2e1e"/></svg></div><div class="nm">Homing post carter H</div><div class="kb"><i style="top:5px"></i><i style="top:10px"></i><i style="top:15px"></i></div></div>
</div>
<div class="abs" style="left:260px;top:343px;width:316px;height:38px;background:#151515;border:1px solid #232323;border-radius:3px">
 <svg class="abs" style="left:10px;top:10px" width="16" height="16"><path d="M5 3l5 5-5 5" fill="none" stroke="#ddd" stroke-width="1.6"/></svg>
 <div class="t" style="left:38px;top:11px;font-size:15px;font-weight:bold;color:#f0f0f0;transform:scaleX(.913);transform-origin:left">Arbre de scène</div>
 <div class="help" style="left:225px;top:8px;width:22px;height:22px;font-size:15px;line-height:22px">?</div>
 <svg class="abs" style="left:256px;top:11px" width="16" height="16"><path d="M7 3H3v10h10V9M9 2h5v5M14 2L7 9" fill="none" stroke="#ddd" stroke-width="1.4"/></svg>
 <svg class="abs" style="left:288px;top:11px" width="16" height="16"><path d="M2 2l12 12M14 2L2 14" fill="none" stroke="#eee" stroke-width="1.6"/></svg>
</div>
<div id="rp">
 <div class="abs" style="left:0;top:22px;width:274px;height:805px;background:#1b1b1b"></div>
 <svg class="abs" style="left:15px;top:5px" width="14" height="14"><path d="M7 1v12M1 7h12M5 3l2-2 2 2M5 11l2 2 2-2M3 5L1 7l2 2M11 5l2 2-2 2" fill="none" stroke="#ddd" stroke-width="1.1"/></svg>
 <div class="t" style="left:37px;top:4px;font-size:13px;color:#eee;transform:scaleX(.94);transform-origin:left">Jogger</div>
 <svg class="abs" style="left:93px;top:4px" width="16" height="16"><circle cx="8" cy="6" r="3" fill="none" stroke="#ddd" stroke-width="1.3"/><path d="M8 9v3M3 12c0 2 10 2 10 0" fill="none" stroke="#ddd" stroke-width="1.3"/></svg>
 <div class="abs" style="left:1px;top:19px;width:90px;height:2px;background:#2bc8f6"></div>
 <div class="t" style="left:7px;top:31px;font-size:14px;font-weight:bold;color:#fff;transform:scaleX(.973);transform-origin:left">UniversalRobots UR10e</div>
 <svg class="abs" style="left:185px;top:30px" width="16" height="16"><path d="M3 13l1-3 7-7 2 2-7 7z" fill="#eee"/></svg>
 <div class="help" style="left:244px;top:29px;width:22px;height:22px;font-size:15px;line-height:22px">?</div>
 <div class="abs" style="left:11px;top:54px;width:29px;height:16px;background:#3a3a3a;border-radius:8px"></div>
 <div class="abs" style="left:11px;top:54px;width:16px;height:16px;border:1.5px solid #888;border-radius:50%;background:#1b1b1b"></div>
 <div class="t" style="left:49px;top:56px;font-size:12px;color:#eee">Valeurs du robot physique</div>
 <div class="t" style="left:45px;top:78px;font-size:12px;color:#eee;width:130px">Articulaire</div>
 <div class="abs" style="left:7px;top:92px;width:130px;height:2px;background:#2bc8f6"></div>
 <div class="t" style="left:175px;top:78px;font-size:12px;color:#eee">Cartésien</div>
 <svg class="abs" style="left:0;top:0" width="274" height="800"><path d="M60.2 167.2 A30 30 0 1 1 80.8 167.2" fill="none" stroke="#3a3a3a" stroke-width="4" stroke-linecap="round"/><path d="M60.2 167.2 A30 30 0 0 1 47.0 120.3" fill="none" stroke="#2bc8f6" stroke-width="6" stroke-linecap="round"/><circle cx="47.0" cy="120.3" r="6" fill="#1b1b1b" stroke="#2bc8f6" stroke-width="2.5"/><path d="M60.2 271.2 A30 30 0 1 1 80.8 271.2" fill="none" stroke="#3a3a3a" stroke-width="4" stroke-linecap="round"/><path d="M60.2 271.2 A30 30 0 0 1 45.5 226.5" fill="none" stroke="#2bc8f6" stroke-width="6" stroke-linecap="round"/><circle cx="45.5" cy="226.5" r="6" fill="#1b1b1b" stroke="#2bc8f6" stroke-width="2.5"/><path d="M60.2 375.2 A30 30 0 1 1 80.8 375.2" fill="none" stroke="#3a3a3a" stroke-width="4" stroke-linecap="round"/><path d="M60.2 375.2 A30 30 0 0 1 47.5 327.7" fill="none" stroke="#2bc8f6" stroke-width="6" stroke-linecap="round"/><circle cx="47.5" cy="327.7" r="6" fill="#1b1b1b" stroke="#2bc8f6" stroke-width="2.5"/><path d="M60.2 479.2 A30 30 0 1 1 80.8 479.2" fill="none" stroke="#3a3a3a" stroke-width="4" stroke-linecap="round"/><path d="M60.2 479.2 A30 30 0 0 1 73.3 421.1" fill="none" stroke="#2bc8f6" stroke-width="6" stroke-linecap="round"/><circle cx="73.3" cy="421.1" r="6" fill="#1b1b1b" stroke="#2bc8f6" stroke-width="2.5"/><path d="M60.2 583.2 A30 30 0 1 1 80.8 583.2" fill="none" stroke="#3a3a3a" stroke-width="4" stroke-linecap="round"/><path d="M60.2 583.2 A30 30 0 1 1 92.8 534.9" fill="none" stroke="#2bc8f6" stroke-width="6" stroke-linecap="round"/><circle cx="92.8" cy="534.9" r="6" fill="#1b1b1b" stroke="#2bc8f6" stroke-width="2.5"/><path d="M60.2 687.2 A30 30 0 1 1 80.8 687.2" fill="none" stroke="#3a3a3a" stroke-width="4" stroke-linecap="round"/><path d="M60.2 687.2 A30 30 0 1 1 99.0 649.6" fill="none" stroke="#2bc8f6" stroke-width="6" stroke-linecap="round"/><circle cx="99.0" cy="649.6" r="6" fill="#1b1b1b" stroke="#2bc8f6" stroke-width="2.5"/></svg>
<div class="t" style="left:57px;top:133px;font-size:11px;color:#eee;transform:scaleX(.93);transform-origin:left">Axe 1</div><div class="t" style="left:13px;top:184px;font-size:12px;color:#eee">-360.00 °</div><div class="t" style="left:81px;top:184px;font-size:12px;color:#eee">360.00 °</div><div class="abs" style="left:141px;top:116px;width:126px;height:22px;background:#333;border-radius:3px"><div class="t" style="left:9px;top:5px;font-size:12px;color:#aaa">–</div><div class="t" style="left:29px;top:5px;font-size:12px;color:#eee">-115.69 °</div><svg class="abs" style="left:106px;top:4px" width="14" height="14"><path d="M7 1v12M1 7h12" stroke="#eee" stroke-width="1.5"/></svg></div><div class="t" style="left:141px;width:126px;text-align:center;top:147px;font-size:8px;color:#ddd;transform:scaleX(.9)">VITESSE</div><div class="t" style="left:141px;width:126px;text-align:center;top:159px;font-size:13px;color:#eee">0°/s</div><div class="t" style="left:141px;width:126px;text-align:center;top:176px;font-size:8px;color:#6a6a6a">max 100.00°/s</div><div class="t" style="left:57px;top:237px;font-size:11px;color:#eee;transform:scaleX(.93);transform-origin:left">Axe 2</div><div class="t" style="left:13px;top:288px;font-size:12px;color:#eee">-360.00 °</div><div class="t" style="left:81px;top:288px;font-size:12px;color:#eee">360.00 °</div><div class="abs" style="left:141px;top:220px;width:126px;height:22px;background:#333;border-radius:3px"><div class="t" style="left:9px;top:5px;font-size:12px;color:#aaa">–</div><div class="t" style="left:29px;top:5px;font-size:12px;color:#eee">-127.20 °</div><svg class="abs" style="left:106px;top:4px" width="14" height="14"><path d="M7 1v12M1 7h12" stroke="#eee" stroke-width="1.5"/></svg></div><div class="t" style="left:141px;width:126px;text-align:center;top:251px;font-size:8px;color:#ddd;transform:scaleX(.9)">VITESSE</div><div class="t" style="left:141px;width:126px;text-align:center;top:263px;font-size:13px;color:#eee">0°/s</div><div class="t" style="left:141px;width:126px;text-align:center;top:280px;font-size:8px;color:#6a6a6a">max 100.00°/s</div><div class="t" style="left:57px;top:341px;font-size:11px;color:#eee;transform:scaleX(.93);transform-origin:left">Axe 3</div><div class="t" style="left:13px;top:392px;font-size:12px;color:#eee">-360.00 °</div><div class="t" style="left:81px;top:392px;font-size:12px;color:#eee">360.00 °</div><div class="abs" style="left:141px;top:324px;width:126px;height:22px;background:#333;border-radius:3px"><div class="t" style="left:9px;top:5px;font-size:12px;color:#aaa">–</div><div class="t" style="left:29px;top:5px;font-size:12px;color:#eee">-112.66 °</div><svg class="abs" style="left:106px;top:4px" width="14" height="14"><path d="M7 1v12M1 7h12" stroke="#eee" stroke-width="1.5"/></svg></div><div class="t" style="left:141px;width:126px;text-align:center;top:355px;font-size:8px;color:#ddd;transform:scaleX(.9)">VITESSE</div><div class="t" style="left:141px;width:126px;text-align:center;top:367px;font-size:13px;color:#eee">0°/s</div><div class="t" style="left:141px;width:126px;text-align:center;top:384px;font-size:8px;color:#6a6a6a">max 100.00°/s</div><div class="t" style="left:57px;top:445px;font-size:11px;color:#eee;transform:scaleX(.93);transform-origin:left">Axe 4</div><div class="t" style="left:13px;top:496px;font-size:12px;color:#eee">-360.00 °</div><div class="t" style="left:81px;top:496px;font-size:12px;color:#eee">360.00 °</div><div class="abs" style="left:141px;top:428px;width:126px;height:22px;background:#333;border-radius:3px"><div class="t" style="left:9px;top:5px;font-size:12px;color:#aaa">–</div><div class="t" style="left:29px;top:5px;font-size:12px;color:#eee">11.88 °</div><svg class="abs" style="left:106px;top:4px" width="14" height="14"><path d="M7 1v12M1 7h12" stroke="#eee" stroke-width="1.5"/></svg></div><div class="t" style="left:141px;width:126px;text-align:center;top:459px;font-size:8px;color:#ddd;transform:scaleX(.9)">VITESSE</div><div class="t" style="left:141px;width:126px;text-align:center;top:471px;font-size:13px;color:#eee">0°/s</div><div class="t" style="left:141px;width:126px;text-align:center;top:488px;font-size:8px;color:#6a6a6a">max 100.00°/s</div><div class="t" style="left:57px;top:549px;font-size:11px;color:#eee;transform:scaleX(.93);transform-origin:left">Axe 5</div><div class="t" style="left:13px;top:600px;font-size:12px;color:#eee">-360.00 °</div><div class="t" style="left:81px;top:600px;font-size:12px;color:#eee">360.00 °</div><div class="abs" style="left:141px;top:532px;width:126px;height:22px;background:#333;border-radius:3px"><div class="t" style="left:9px;top:5px;font-size:12px;color:#aaa">–</div><div class="t" style="left:29px;top:5px;font-size:12px;color:#eee">107.85 °</div><svg class="abs" style="left:106px;top:4px" width="14" height="14"><path d="M7 1v12M1 7h12" stroke="#eee" stroke-width="1.5"/></svg></div><div class="t" style="left:141px;width:126px;text-align:center;top:563px;font-size:8px;color:#ddd;transform:scaleX(.9)">VITESSE</div><div class="t" style="left:141px;width:126px;text-align:center;top:575px;font-size:13px;color:#eee">0°/s</div><div class="t" style="left:141px;width:126px;text-align:center;top:592px;font-size:8px;color:#6a6a6a">max 100.00°/s</div><div class="t" style="left:57px;top:653px;font-size:11px;color:#eee;transform:scaleX(.93);transform-origin:left">Axe 6</div><div class="t" style="left:13px;top:704px;font-size:12px;color:#eee">-360.00 °</div><div class="t" style="left:81px;top:704px;font-size:12px;color:#eee">360.00 °</div><div class="abs" style="left:141px;top:636px;width:126px;height:22px;background:#333;border-radius:3px"><div class="t" style="left:9px;top:5px;font-size:12px;color:#aaa">–</div><div class="t" style="left:29px;top:5px;font-size:12px;color:#eee">161.21 °</div><svg class="abs" style="left:106px;top:4px" width="14" height="14"><path d="M7 1v12M1 7h12" stroke="#eee" stroke-width="1.5"/></svg></div><div class="t" style="left:141px;width:126px;text-align:center;top:667px;font-size:8px;color:#ddd;transform:scaleX(.9)">VITESSE</div><div class="t" style="left:141px;width:126px;text-align:center;top:679px;font-size:13px;color:#eee">0°/s</div><div class="t" style="left:141px;width:126px;text-align:center;top:696px;font-size:8px;color:#6a6a6a">max 100.00°/s</div>
 <div class="t" style="left:16px;top:772px;font-size:12px;color:#eee">Vitesse de jog</div>
 <div class="abs" style="left:16px;top:799px;width:178px;height:5px;background:#2bc8f6;border-radius:3px"></div>
 <div class="abs" style="left:187px;top:795px;width:13px;height:13px;border:2.5px solid #2bc8f6;border-radius:50%;background:#1b1b1b"></div>
 <div class="abs" style="left:206px;top:791px;width:60px;height:22px;background:#333;border-radius:3px"><div class="t" style="left:8px;top:5px;font-size:12px;color:#eee">100 %</div></div>
 <div class="abs" style="left:7px;top:835px;width:22px;height:22px;background:#161616;border-radius:3px"></div>
 <svg class="abs" style="left:11px;top:840px" width="14" height="12"><path d="M2 3l5 5 5-5" fill="none" stroke="#eee" stroke-width="1.8"/></svg>
 <div class="t" style="left:37px;top:840px;font-size:14px;font-weight:bold;color:#fff">Robot control</div>
 <div class="help" style="left:245px;top:835px;width:22px;height:22px;font-size:15px;line-height:22px">?</div>
 <svg class="abs" style="left:7px;top:865px" width="21" height="21"><circle cx="10.5" cy="10.5" r="9.5" fill="none" stroke="#999" stroke-width="1.2"/><path d="M6 8.5h9M12.5 6l2.5 2.5M15 12.5H6M8.5 15L6 12.5" fill="none" stroke="#bbb" stroke-width="1.2"/></svg>
 <div class="t" style="left:32px;top:869px;font-size:12px;font-weight:bold;color:#999;transform:scaleX(.927);transform-origin:left">Basculer en physique</div>
 <div class="abs" style="left:7px;top:893px;width:144px;height:25px;background:#171717;border-radius:3px"><div class="t" style="left:9px;top:7px;font-size:12px;font-weight:bold;color:#2bc8f6;transform:scaleX(.934);transform-origin:left">Assistant de connexion</div></div>
 <div class="abs" style="left:203px;top:893px;width:64px;height:25px;background:#171717;border-radius:3px"><div class="t" style="left:9px;top:7px;font-size:12px;font-weight:bold;color:#2bc8f6;transform:scaleX(.93);transform-origin:left">Changer</div></div>
<div class="abs" style="left:7px;top:926px;width:260px;height:65px;border:1px solid #262626;border-radius:4px"><div class="abs" style="left:8px;top:8px;width:118px;height:49px;background:#2bc8f6;border-radius:3px"><svg class="abs" style="left:50px;top:6px" width="18" height="18"><rect x="2.5" y="3.5" width="13" height="10" fill="none" stroke="#123" stroke-width="1.3"/><path d="M2.5 6h13" stroke="#123" stroke-width="1.3"/></svg><div class="t" style="left:0;width:118px;text-align:center;top:26px;font-size:12px;font-weight:bold;color:#13232b;transform:scaleX(.93)">Simulation</div></div><div class="abs" style="left:134px;top:8px;width:118px;height:49px;background:#1e6a84;border-radius:3px"><svg class="abs" style="left:50px;top:6px" width="18" height="18"><path d="M4 15h8M6 15v-3l4-3-3-3M7 6l3-2 3 2M11 9l3 2" fill="none" stroke="#111" stroke-width="1.2"/><circle cx="7" cy="6" r="1.2" fill="#111"/></svg><div class="t" style="left:0;width:118px;text-align:center;top:26px;font-size:12px;font-weight:bold;color:#13232b;transform:scaleX(.93)">Physique</div></div></div>
 <div class="t" style="left:7px;top:1000px;font-size:11px;color:#eee">Mode de fonctionnement :</div>
<div class="abs" style="left:7px;top:1021px;width:260px;height:65px;border:1px solid #262626;border-radius:4px"><div class="abs" style="left:8px;top:8px;width:118px;height:49px;background:#1e6a84;border-radius:3px"><svg class="abs" style="left:50px;top:6px" width="18" height="18"><path d="M6 15c-2-2-3-4-3-6l1-1 2 2V4a1 1 0 0 1 2 0v5V3a1 1 0 0 1 2 0v6V4a1 1 0 0 1 2 0v6l1-2a1 1 0 0 1 1 1l-2 6z" fill="none" stroke="#111" stroke-width="1.1"/></svg><div class="t" style="left:0;width:118px;text-align:center;top:26px;font-size:12px;font-weight:bold;color:#13232b;transform:scaleX(.93)">Manuel</div></div><div class="abs" style="left:134px;top:8px;width:118px;height:49px;background:#f3c800;border-radius:3px"><svg class="abs" style="left:50px;top:6px" width="18" height="18"><path d="M3.5 9a5.5 5.5 0 0 1 10-3M14.5 9a5.5 5.5 0 0 1-10 3M13.5 3v3h-3M4.5 15v-3h3" fill="none" stroke="#111" stroke-width="1.2"/><path d="M7 11.5l2-5 2 5M7.8 9.5h2.4" fill="none" stroke="#111" stroke-width="1"/></svg><div class="t" style="left:0;width:118px;text-align:center;top:26px;font-size:12px;font-weight:bold;color:#13232b;transform:scaleX(.93)">Auto</div></div></div>
 <div class="t" style="left:7px;top:1095px;font-size:11px;color:#eee">Mode de vitesse :</div>
<div class="abs" style="left:7px;top:1116px;width:260px;height:65px;border:1px solid #262626;border-radius:4px"><div class="abs" style="left:8px;top:8px;width:118px;height:49px;background:#2bc8f6;border-radius:3px"><svg class="abs" style="left:50px;top:6px" width="18" height="18"><path d="M3 13h9c2 0 3-2 3-4l1-4M14 6l1-3M12 13a4 4 0 1 0-7-3c0 2 2 3 3 2" fill="none" stroke="#123" stroke-width="1.1"/></svg><div class="t" style="left:0;width:118px;text-align:center;top:26px;font-size:12px;font-weight:bold;color:#13232b;transform:scaleX(.93)">Réduit</div></div><div class="abs" style="left:134px;top:8px;width:118px;height:49px;background:#1e6a84;border-radius:3px"><svg class="abs" style="left:50px;top:6px" width="18" height="18"><path d="M4 14h9c1-2 0-5-3-6l1-3-1-1-2 4c-3 0-5 2-5 4z" fill="none" stroke="#111" stroke-width="1.1"/></svg><div class="t" style="left:0;width:118px;text-align:center;top:26px;font-size:12px;font-weight:bold;color:#13232b;transform:scaleX(.93)">Rapide</div></div></div>
 <div class="abs" style="left:7px;top:1189px;width:260px;height:74px;border:1px solid #262626;border-radius:4px">
  <svg class="abs" style="left:10px;top:14px" width="20" height="20"><path d="M9 2H3v16h6M3 5h5M5 15a1 1 0 1 0 .1 0M8 10h10M15 7l3 3-3 3" fill="none" stroke="#ddd" stroke-width="1.2"/></svg>
  <div class="t" style="left:33px;top:17px;font-size:12px;color:#eee">Périphérique externe</div>
  <div class="abs" style="left:222px;top:11px;width:22px;height:22px;background:#161616;border-radius:3px"></div>
  <svg class="abs" style="left:226px;top:15px" width="14" height="14"><circle cx="7" cy="7" r="4" fill="none" stroke="#fff" stroke-width="3"/><circle cx="7" cy="7" r="5.6" fill="none" stroke="#fff" stroke-width="2" stroke-dasharray="2.2 2.2"/></svg>
  <div class="t" style="left:20px;top:49px;font-size:12px;color:#eee">plc</div>
  <div class="abs" style="left:221px;top:46px;width:29px;height:16px;background:#3a3a3a;border-radius:8px"></div>
  <div class="abs" style="left:221px;top:46px;width:16px;height:16px;border:1.5px solid #888;border-radius:50%;background:#111"></div>
 </div>
 <div class="abs" style="left:7px;top:1272px;width:260px;height:56px;border:1px solid #262626;border-radius:4px">
  <svg class="abs" style="left:10px;top:11px" width="16" height="16"><path d="M8 1v14M1 8h14M6 3l2-2 2 2M6 13l2 2 2-2M3 6L1 8l2 2M13 6l2 2-2 2" fill="none" stroke="#888" stroke-width="1.1"/></svg>
  <div class="t" style="left:31px;top:13px;font-size:12px;color:#888">Jog</div>
  <div class="t" style="left:11px;top:32px;font-size:9px;color:#777">Déplacer le robot manuellement</div>
  <div class="abs" style="left:221px;top:20px;width:29px;height:16px;background:#2a2a2a;border-radius:8px"></div>
  <div class="abs" style="left:223px;top:22px;width:12px;height:12px;border-radius:50%;background:#161616"></div>
 </div>
</div>
<div id="bb">
 <div class="abs" style="left:20px;top:25px;width:2092px;height:4px;background:#444;border-radius:2px"></div>
 <div class="abs" style="left:20px;top:24px;width:138px;height:6px;background:#2bc8f6;border-radius:3px"></div>
 <div class="abs" style="left:150px;top:20px;width:14px;height:14px;border:2.5px solid #2bc8f6;border-radius:50%;background:#121212"></div>
 <div class="t" style="left:2128px;top:22px;font-size:11px;color:#eee;transform:scaleX(.92);transform-origin:left">00:00.832/00:13.288</div>
 <div class="help" style="left:2237px;top:16px;width:22px;height:22px;font-size:15px;line-height:22px;background:#1c1c1c">?</div>
 <div class="t" style="left:2146px;top:48px;font-size:11px;color:#eee;transform:scaleX(.97);transform-origin:left">En cours : CarterB2</div>
 <svg class="abs" style="left:2246px;top:47px" width="13" height="13"><circle cx="6.5" cy="6.5" r="3.5" fill="none" stroke="#fff" stroke-width="2.6"/><circle cx="6.5" cy="6.5" r="5.2" fill="none" stroke="#fff" stroke-width="2" stroke-dasharray="2 2"/></svg>
 <div class="t" style="left:21px;top:51px;font-size:12px;color:#eee;transform:scaleX(.876);transform-origin:left">Override</div>
 <div class="abs" style="left:67px;top:46px;width:48px;height:22px;background:#3a3a3a;border-radius:3px"><div class="t" style="left:8px;top:5px;font-size:12px;color:#eee">100 %</div></div>
 <div class="t" style="left:144px;top:51px;font-size:12px;color:#eee;transform:scaleX(.937);transform-origin:left">de 30.45 mm/s</div>
 <div class="abs" style="left:20px;top:80px;width:192px;height:6px;background:#2bc8f6;border-radius:3px"></div>
 <div class="abs" style="left:205px;top:76px;width:14px;height:14px;border:2.5px solid #2bc8f6;border-radius:50%;background:#121212"></div>
 <div class="abs" style="left:980px;top:46px;width:100px;height:49px;background:#1b1b1b;border:1px solid #3a3a3a;border-radius:3px">
  <svg class="abs" style="left:40px;top:6px" width="16" height="16"><circle cx="4" cy="3.5" r="2" fill="none" stroke="#888" stroke-width="1.1"/><path d="M4 5.5l2 3h5l-6 4h7" fill="none" stroke="#888" stroke-width="1.1"/><circle cx="5" cy="12.5" r="1.3" fill="none" stroke="#888"/><circle cx="12" cy="12.5" r="1.3" fill="none" stroke="#888"/></svg>
  <div class="t" style="left:0;width:98px;text-align:center;top:25px;font-size:12px;font-weight:bold;color:#999;transform:scaleX(.94)">Aller au départ</div></div>
 <div class="abs" style="left:1088px;top:46px;width:72px;height:49px;background:#2bc8f6;border-radius:3px">
  <svg class="abs" style="left:28px;top:6px" width="16" height="16"><circle cx="8" cy="8" r="5.5" fill="none" stroke="#123" stroke-width="1.3" stroke-dasharray="2 1.5"/><path d="M6.5 5.5v5l4-2.5z" fill="#123"/></svg>
  <div class="t" style="left:0;width:72px;text-align:center;top:25px;font-size:12px;font-weight:bold;color:#10252d;transform:scaleX(.93)">Visualiser</div></div>
 <div class="abs" style="left:1168px;top:46px;width:50px;height:49px;background:#3c3c3c;border-radius:3px 0 0 3px">
  <svg class="abs" style="left:18px;top:7px" width="14" height="14"><path d="M9 2v10L2 7z" fill="#888"/><rect x="10.5" y="2" width="2" height="10" fill="#888"/></svg>
  <div class="t" style="left:0;width:50px;text-align:center;top:25px;font-size:12px;font-weight:bold;color:#888;transform:scaleX(.93)">Rwd.</div></div>
 <div class="abs" style="left:1219px;top:46px;width:81px;height:49px;background:#2bc8f6;border-radius:0 3px 3px 0">
  <svg class="abs" style="left:33px;top:7px" width="14" height="14"><path d="M3 2v10l8-5z" fill="#111"/></svg>
  <div class="t" style="left:0;width:81px;text-align:center;top:25px;font-size:12px;font-weight:bold;color:#10252d;transform:scaleX(.93)">Play</div></div>
</div></body></html>
